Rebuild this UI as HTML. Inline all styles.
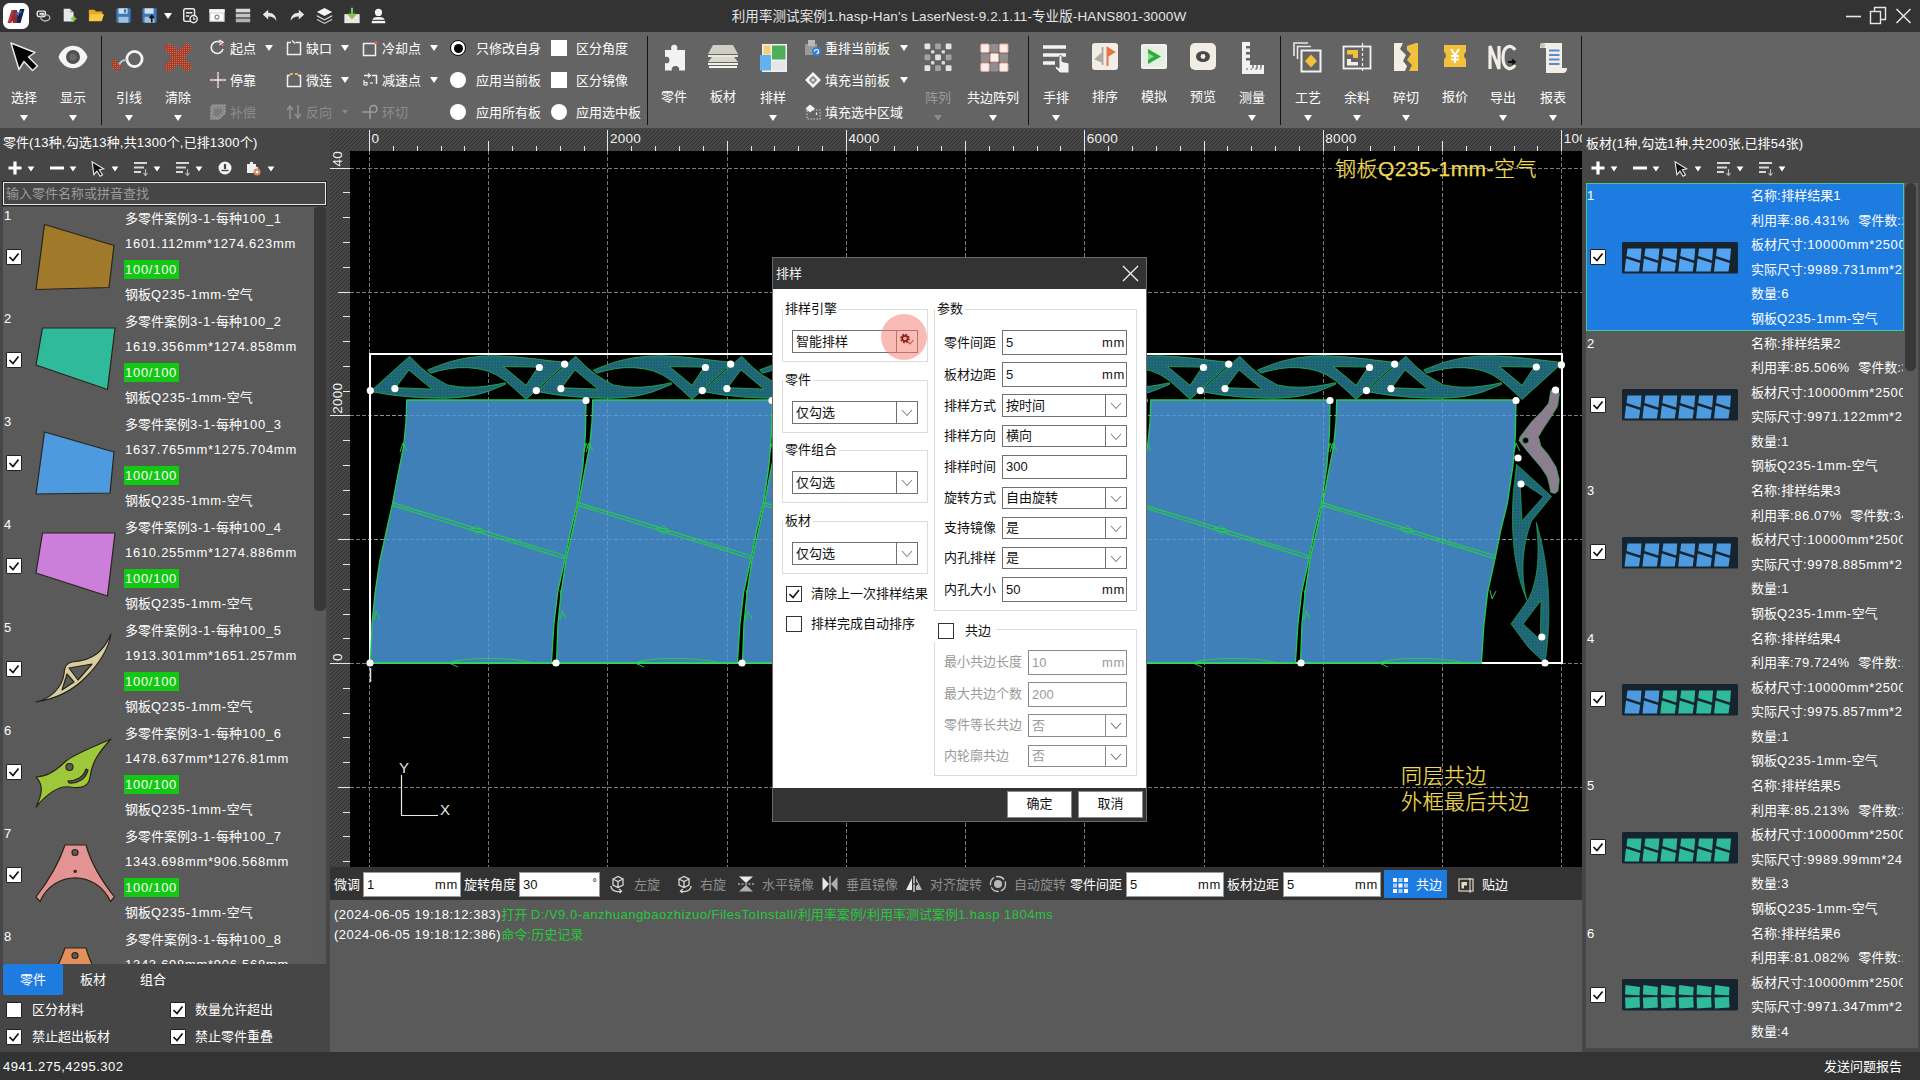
<!DOCTYPE html>
<html lang="zh-CN">
<head>
<meta charset="utf-8">
<title>Han's LaserNest</title>
<style>
html,body{margin:0;padding:0;}
body{width:1920px;height:1080px;overflow:hidden;background:#464646;position:relative;
 font-family:"Liberation Sans","Noto Sans CJK SC",sans-serif;font-size:13px;color:#fff;line-height:1;}
.a{position:absolute;}
.t{position:absolute;white-space:nowrap;line-height:16px;height:16px;}
svg{position:absolute;overflow:visible;}
#titlebar{left:0;top:0;width:1920px;height:32px;background:#333;}
#ribbon{left:0;top:32px;width:1920px;height:96px;background:#646464;}
#status{left:0;top:1052px;width:1920px;height:28px;background:#333;}
.cb{position:absolute;width:16px;height:16px;border-radius:1px;background:#fff;border:1px solid #222;box-sizing:border-box;}
.cb svg{left:0;top:0;}
.rb{position:absolute;width:16px;height:16px;border-radius:50%;background:#fff;box-sizing:border-box;}
.tri{position:absolute;width:0;height:0;border-left:4px solid transparent;border-right:4px solid transparent;border-top:6px solid #fff;}
#qa svg{transform:scale(.9);transform-origin:50% 50%;}
.dis{color:#8a8a8a;}
.l{letter-spacing:.72px;}
</style>
</head>
<body>
<div id="titlebar" class="a">
 <!-- logo -->
 <svg style="left:3px;top:3px" width="26" height="26" viewBox="0 0 26 26"><rect x="0" y="0" width="26" height="26" rx="6.500" fill="#fff"/><path d="M4.500 20 L8.500 7 L12.500 7 L8.500 20 Z" fill="#b8382e"/><path d="M8.500 16 L11 7 L14 7 L15.500 14 L13 20 L10 20 Z" fill="#8c2c34"/><path d="M13 20 L17 6 L21.500 6 L17.500 20 Z" fill="#13244e"/><path d="M12 11 L19 7.500 L18.500 9.500 L12.500 12.500 Z" fill="#2f6fd0"/></svg>
 <!-- quick access icons --><div class="a" id="qa" style="left:0;top:0">
 <svg style="left:35px;top:8px" width="18" height="16" viewBox="0 0 18 16"><rect x="1.5" y="2.5" width="9" height="6" rx="1.5" fill="none" stroke="#eee" stroke-width="1.5"/><ellipse cx="10.5" cy="10" rx="5" ry="3.5" fill="none" stroke="#bbb" stroke-width="1.5"/><rect x="4" y="4.5" width="5" height="2" fill="#eee"/></svg>
 <svg style="left:61px;top:7px" width="18" height="18" viewBox="0 0 18 18"><path d="M2 1 H9 L13 5 V15 H2 Z" fill="#e8e8e8"/><path d="M9 1 L13 5 H9 Z" fill="#aaa"/><path d="M10 12 H16 M13 9 V15" stroke="#8cc04a" stroke-width="2.2"/></svg>
 <svg style="left:87px;top:7px" width="19" height="17" viewBox="0 0 19 17"><path d="M1 2 H7 L9 4 H16 V14 H1 Z" fill="#e9a820"/><path d="M3 7 H18 L15 15 H1 Z" fill="#f7c948"/></svg>
 <svg style="left:115px;top:7px" width="17" height="17" viewBox="0 0 17 17"><rect x="0.5" y="0.5" width="16" height="16" rx="1" fill="#3c78b4"/><rect x="3" y="0.5" width="10" height="6" fill="#cfe0f0"/><rect x="3" y="10" width="11" height="6.5" fill="#9fc0e0"/><rect x="9" y="1.5" width="2.5" height="4" fill="#3c78b4"/></svg>
 <svg style="left:141px;top:7px" width="17" height="17" viewBox="0 0 17 17"><rect x="0.5" y="0.5" width="16" height="16" rx="1" fill="#3c78b4"/><rect x="3" y="0.5" width="10" height="6" fill="#cfe0f0"/><rect x="3" y="10" width="11" height="6.5" fill="#9fc0e0"/><path d="M11 16 V9 M8.5 11.5 L11 8.5 L13.5 11.5" stroke="#111" stroke-width="1.8" fill="none"/></svg>
 <div class="tri" style="left:164px;top:13px"></div>
 <svg style="left:181px;top:6px" width="19" height="19" viewBox="0 0 19 19"><rect x="2" y="2" width="12" height="14" rx="2" fill="none" stroke="#eee" stroke-width="1.6"/><path d="M4.5 6.5 H11.5 M4.5 10 H8" stroke="#eee" stroke-width="1.6"/><circle cx="13" cy="13.5" r="4" fill="#333" stroke="#eee" stroke-width="1.5"/><path d="M13 11.5 V13.5 H15" stroke="#eee" stroke-width="1.2" fill="none"/></svg>
 <svg style="left:208px;top:8px" width="18" height="15" viewBox="0 0 18 15"><rect x="0.5" y="0.5" width="17" height="14" fill="#ddd"/><rect x="0.5" y="0.5" width="17" height="3.5" fill="#f6f6f6"/><rect x="2" y="5.5" width="14" height="7.5" fill="#fff"/><circle cx="9" cy="9.3" r="2.2" fill="none" stroke="#888" stroke-width="1.3"/></svg>
 <svg style="left:234px;top:7px" width="18" height="17" viewBox="0 0 18 17"><rect x="1" y="1" width="16" height="4" fill="#d8d8d8"/><rect x="1" y="6.5" width="16" height="4" fill="#c4c4c4"/><rect x="1" y="12" width="16" height="4" fill="#b0b0b0"/><path d="M1 5.7 H17 M1 11.2 H17" stroke="#777" stroke-width="1"/></svg>
 <svg style="left:261px;top:8px" width="18" height="15" viewBox="0 0 18 15"><path d="M7 1 L1 6.5 L7 12 V8.5 C11 8.5 14 9.5 16 13.5 C16 8 12.5 4.5 7 4.5 Z" fill="#e6e6e6"/></svg>
 <svg style="left:288px;top:8px" width="18" height="15" viewBox="0 0 18 15"><path d="M11 1 L17 6.5 L11 12 V8.5 C7 8.5 4 9.5 2 13.5 C2 8 5.5 4.5 11 4.5 Z" fill="#e6e6e6"/></svg>
 <svg style="left:315px;top:6px" width="19" height="20" viewBox="0 0 19 20"><path d="M9.5 1 L18 5.5 L9.5 10 L1 5.5 Z" fill="#f4f4f4"/><path d="M1 9 L9.5 13.5 L18 9 L18 10.5 L9.5 15 L1 10.5Z" fill="#ddd"/><path d="M1 13 L9.5 17.5 L18 13 L18 14.5 L9.5 19 L1 14.5Z" fill="#ccc"/></svg>
 <svg style="left:343px;top:6px" width="18" height="19" viewBox="0 0 18 19"><rect x="0.5" y="8" width="17" height="10" fill="#e8e8e8"/><path d="M9 1 V11 M5 7.5 L9 12 L13 7.5" stroke="#86c052" stroke-width="2.400" fill="none"/></svg>
 <svg style="left:370px;top:7px" width="17" height="18" viewBox="0 0 17 18"><circle cx="8.5" cy="5" r="4" fill="#f2f2f2"/><path d="M1 17 C1 11 4 10 8.5 10 C13 10 16 11 16 17 Z" fill="#f2f2f2"/><rect x="1" y="13.2" width="15" height="1.2" fill="#333"/></svg>
</div>
 <div class="t" id="ttl" style="left:731px;top:9px;letter-spacing:.12px;width:456px;text-align:center;font-size:13.5px;color:#e4e4e4;">利用率测试案例1.hasp-Han's LaserNest-9.2.1.11-专业版-HANS801-3000W</div>
 <!-- window controls -->
 <svg style="left:1840px;top:0" width="80" height="32" viewBox="0 0 80 32"><path d="M6 16.5 H21" stroke="#e8e8e8" stroke-width="1.6"/><rect x="30.5" y="11.5" width="10" height="12" fill="none" stroke="#e8e8e8" stroke-width="1.4"/><path d="M34.5 11 V7.5 H45.5 V19.5 H41" fill="none" stroke="#e8e8e8" stroke-width="1.4"/><path d="M56.5 9 L70.5 23 M70.5 9 L56.5 23" stroke="#e8e8e8" stroke-width="1.5"/></svg>
</div>
<div id="ribbon" class="a"></div>
<div class="a" style="left:101px;top:36px;width:1px;height:89px;background:#141414"></div>
<div class="a" style="left:647px;top:36px;width:1px;height:89px;background:#141414"></div>
<div class="a" style="left:1028px;top:36px;width:1px;height:89px;background:#141414"></div>
<div class="a" style="left:1280px;top:36px;width:1px;height:89px;background:#141414"></div>
<div class="a" style="left:1581px;top:36px;width:1px;height:89px;background:#141414"></div>
<div class="a" style="left:-6px;top:38px;width:60px;height:40px"><svg width="60" height="40" viewBox="0 0 60 40"><path d="M17 5 L41 14.500 L34.500 19 L43.500 28 L38.500 32.500 L30 23.500 L25 31.500 Z" fill="#000" stroke="#e8e8e8" stroke-width="1.500" stroke-linejoin="round"/></svg></div><div class="t" style="left:-16px;top:90px;width:80px;text-align:center;color:#fff">选择</div><div class="tri" style="left:20px;top:115px;border-top-color:#fff"></div>
<div class="a" style="left:43px;top:38px;width:60px;height:40px"><svg width="60" height="40" viewBox="0 0 60 40"><path d="M15.500 19 C21 4 39 4 44.500 19 C39 34 21 34 15.500 19 Z" fill="#f4f4f4"/><circle cx="30" cy="19" r="5.300" fill="#6a6a6a" stroke="#505050" stroke-width="3.400"/></svg></div><div class="t" style="left:33px;top:90px;width:80px;text-align:center;color:#fff">显示</div><div class="tri" style="left:69px;top:115px;border-top-color:#fff"></div>
<div class="a" style="left:99px;top:38px;width:60px;height:40px"><svg width="60" height="40" viewBox="0 0 60 40"><circle cx="35.500" cy="21" r="7.600" fill="none" stroke="#f6f6f6" stroke-width="2.800"/><path d="M28 22 C24 21.500 21 24 19.500 28" fill="none" stroke="#c4c4c4" stroke-width="2"/><path d="M14 21 C11.500 24 12 30 16 32 C19 33 22.500 32 23 29 L20 26 L17 28 L17.500 22 Z" fill="url(#xp)"/></svg></div><div class="t" style="left:89px;top:90px;width:80px;text-align:center;color:#fff">引线</div><div class="tri" style="left:125px;top:115px;border-top-color:#fff"></div>
<div class="a" style="left:148px;top:38px;width:60px;height:40px"><svg width="60" height="40" viewBox="0 0 60 40"><defs><pattern id="xp" width="2" height="2" patternUnits="userSpaceOnUse"><rect width="2" height="2" fill="#a83a2c"/><rect width="1" height="1" fill="#c87848"/></pattern></defs><path d="M21 10 L39 29 M39 10 L21 29" stroke="url(#xp)" stroke-width="8.500" stroke-linecap="round"/></svg></div><div class="t" style="left:138px;top:90px;width:80px;text-align:center;color:#fff">清除</div><div class="tri" style="left:174px;top:115px;border-top-color:#fff"></div>
<div class="a" style="left:644px;top:38px;width:60px;height:40px"><svg width="60" height="40" viewBox="0 0 60 40"><path d="M21 12 H27.500 C25 5 35.500 5 33 12 H41 V32.500 H35 C37 26.500 26 26.500 28 32.500 H21 V25 C27 27.500 27 16.500 21 19 Z" fill="#f2f2f2"/></svg></div><div class="t" style="left:634px;top:89px;width:80px;text-align:center;color:#fff">零件</div>
<div class="a" style="left:693px;top:38px;width:60px;height:40px"><svg width="60" height="40" viewBox="0 0 60 40"><path d="M20 7 H40 L45 16 H15 Z" fill="#cfcfc4"/><path d="M15 17 H45 V19 H15Z" fill="#e8e8dc"/><path d="M19 19 H41 L45 24 H15 Z" fill="#d8d8cc"/><path d="M15 25 H45 V27 H15Z" fill="#f0f0e6"/><path d="M16 28 H44 V30 H16Z" fill="#f4f4ec"/></svg></div><div class="t" style="left:683px;top:89px;width:80px;text-align:center;color:#fff">板材</div>
<div class="a" style="left:743px;top:38px;width:60px;height:40px"><svg width="60" height="40" viewBox="0 0 60 40"><rect x="19" y="6" width="25" height="28" fill="#f0f0f0"/><rect x="20.500" y="7.500" width="7" height="9" fill="#f2d07a"/><rect x="29" y="7.500" width="13.500" height="14" fill="#4fae5a"/><rect x="17" y="17" width="11" height="15.500" fill="#62b2f0"/><rect x="29" y="23" width="13.500" height="9.500" fill="#e4e6e8"/></svg></div><div class="t" style="left:733px;top:90px;width:80px;text-align:center;color:#fff">排样</div><div class="tri" style="left:769px;top:115px;border-top-color:#fff"></div>
<div class="a" style="left:908px;top:38px;width:60px;height:40px"><svg width="60" height="40" viewBox="0 0 60 40"><rect x="16.5" y="5.5" width="5.800" height="5.800" rx="1.200" fill="#e4e4e4"/><rect x="27.1" y="5.5" width="5.800" height="5.800" rx="1.200" fill="#a2a2a2"/><rect x="37.7" y="5.5" width="5.800" height="5.800" rx="1.200" fill="#e4e4e4"/><rect x="16.5" y="16.4" width="5.800" height="5.800" rx="1.200" fill="#a2a2a2"/><rect x="27.1" y="16.4" width="5.800" height="5.800" rx="1.200" fill="#e4e4e4"/><rect x="37.7" y="16.4" width="5.800" height="5.800" rx="1.200" fill="#a2a2a2"/><rect x="16.5" y="27.3" width="5.800" height="5.800" rx="1.200" fill="#e4e4e4"/><rect x="27.1" y="27.3" width="5.800" height="5.800" rx="1.200" fill="#a2a2a2"/><rect x="37.7" y="27.3" width="5.800" height="5.800" rx="1.200" fill="#e4e4e4"/><rect x="23.0" y="12.2" width="3.400" height="3.400" rx="1" fill="#dcdcdc"/><rect x="33.6" y="12.2" width="3.400" height="3.400" rx="1" fill="#dcdcdc"/><rect x="23.0" y="23.1" width="3.400" height="3.400" rx="1" fill="#dcdcdc"/><rect x="33.6" y="23.1" width="3.400" height="3.400" rx="1" fill="#dcdcdc"/></svg></div><div class="t" style="left:898px;top:90px;width:80px;text-align:center;color:#9a9a9a">阵列</div><div class="tri" style="left:934px;top:115px;border-top-color:#8a8a8a"></div>
<div class="a" style="left:963px;top:38px;width:60px;height:40px"><svg width="60" height="40" viewBox="0 0 60 40"><rect x="17.8" y="6.0" width="8.400" height="8.400" rx="1" fill="#fbefec" stroke="#e8a496" stroke-width="1"/><rect x="27.2" y="6.0" width="8.400" height="8.400" rx="1" fill="#8e8e8e"/><rect x="36.6" y="6.0" width="8.400" height="8.400" rx="1" fill="#fbefec" stroke="#e8a496" stroke-width="1"/><rect x="17.8" y="15.5" width="8.400" height="8.400" rx="1" fill="#8e8e8e"/><rect x="27.2" y="15.5" width="8.400" height="8.400" rx="1" fill="#fbefec" stroke="#e8a496" stroke-width="1"/><rect x="36.6" y="15.5" width="8.400" height="8.400" rx="1" fill="#8e8e8e"/><rect x="17.8" y="25.0" width="8.400" height="8.400" rx="1" fill="#fbefec" stroke="#e8a496" stroke-width="1"/><rect x="27.2" y="25.0" width="8.400" height="8.400" rx="1" fill="#8e8e8e"/><rect x="36.6" y="25.0" width="8.400" height="8.400" rx="1" fill="#fbefec" stroke="#e8a496" stroke-width="1"/></svg></div><div class="t" style="left:953px;top:90px;width:80px;text-align:center;color:#fff">共边阵列</div><div class="tri" style="left:989px;top:115px;border-top-color:#fff"></div>
<div class="a" style="left:1026px;top:38px;width:60px;height:40px"><svg width="60" height="40" viewBox="0 0 60 40"><path d="M17 9 H40 M17 17 H40 M17 25 H29" stroke="#f2f2f2" stroke-width="3.4"/><path d="M33 19 V30 L30 28 L29 30 L34 35 H43 V25 L36 23.5 V19 C36 17 33 17 33 19 Z" fill="#f2f2f2" stroke="#646464" stroke-width="1"/></svg></div><div class="t" style="left:1016px;top:90px;width:80px;text-align:center;color:#fff">手排</div><div class="tri" style="left:1052px;top:115px;border-top-color:#fff"></div>
<div class="a" style="left:1075px;top:38px;width:60px;height:40px"><svg width="60" height="40" viewBox="0 0 60 40"><rect x="17" y="5" width="26" height="27" rx="3" fill="#f2eee6"/><path d="M27.500 9 V27 M27.500 15 L21 21 L27.500 24 Z" stroke="#b0aaa4" stroke-width="2" fill="#b0aaa4"/><path d="M32.500 9 V28 M32.500 10 L39 14 L32.500 18 Z" stroke="#e07848" stroke-width="2" fill="#e07848"/></svg></div><div class="t" style="left:1065px;top:89px;width:80px;text-align:center;color:#fff">排序</div>
<div class="a" style="left:1124px;top:38px;width:60px;height:40px"><svg width="60" height="40" viewBox="0 0 60 40"><rect x="17" y="6" width="26" height="25" rx="2" fill="#f2f2f2"/><rect x="19" y="8" width="22" height="21" fill="#e4f0e0"/><path d="M24 11 L37 18.500 L24 26 Z" fill="#2faa3c"/><path d="M24 15 L30 18.500 L24 22Z" fill="#8fd890"/></svg></div><div class="t" style="left:1114px;top:89px;width:80px;text-align:center;color:#fff">模拟</div>
<div class="a" style="left:1173px;top:38px;width:60px;height:40px"><svg width="60" height="40" viewBox="0 0 60 40"><rect x="17" y="5" width="26" height="27" rx="5" fill="#f2eee6"/><ellipse cx="30" cy="18.500" rx="7" ry="5.500" fill="#4a4a4a"/><circle cx="30" cy="18.500" r="2.400" fill="#f2eee6"/></svg></div><div class="t" style="left:1163px;top:89px;width:80px;text-align:center;color:#fff">预览</div>
<div class="a" style="left:1222px;top:38px;width:60px;height:40px"><svg width="60" height="40" viewBox="0 0 60 40"><path d="M20 4 H28 V8 H24 V10.500 H28 V14 H24 V16.500 H28 V20 H24 V22.500 H28 V27 H42 V36 H20 Z" fill="#f2f2f2"/><path d="M24 31 H40" stroke="#646464" stroke-width="1" stroke-dasharray="2 2.500"/><path d="M31 27 V30 M35 27 V31 M39 27 V30" stroke="#646464" stroke-width="1.300"/></svg></div><div class="t" style="left:1212px;top:90px;width:80px;text-align:center;color:#fff">测量</div><div class="tri" style="left:1248px;top:115px;border-top-color:#fff"></div>
<div class="a" style="left:1278px;top:38px;width:60px;height:40px"><svg width="60" height="40" viewBox="0 0 60 40"><path d="M16 18 V5 H30" fill="none" stroke="#e8e8e8" stroke-width="1.600"/><path d="M19.500 21 V8.500 H33" fill="none" stroke="#e8e8e8" stroke-width="1.600"/><rect x="23.500" y="12.500" width="19" height="21" fill="none" stroke="#f2f2f2" stroke-width="2"/><path d="M33 16.500 L39 23 L33 29.500 L27 23 Z" fill="#f2c03a"/></svg></div><div class="t" style="left:1268px;top:90px;width:80px;text-align:center;color:#fff">工艺</div><div class="tri" style="left:1304px;top:115px;border-top-color:#fff"></div>
<div class="a" style="left:1327px;top:38px;width:60px;height:40px"><svg width="60" height="40" viewBox="0 0 60 40"><rect x="16.500" y="8.500" width="27" height="22" fill="none" stroke="#f2f2f2" stroke-width="1.800"/><path d="M35.500 5 V34" stroke="#f2f2f2" stroke-width="1.200" stroke-dasharray="3 2"/><path d="M20 12 H31 V20 H26 V16.500 H20 Z" fill="#f2c03a"/><path d="M20 21 H24 V24 H31 V27.500 H20 Z" fill="#f2eee6"/></svg></div><div class="t" style="left:1317px;top:90px;width:80px;text-align:center;color:#fff">余料</div><div class="tri" style="left:1353px;top:115px;border-top-color:#fff"></div>
<div class="a" style="left:1376px;top:38px;width:60px;height:40px"><svg width="60" height="40" viewBox="0 0 60 40"><path d="M18 5 H27 L24 11 L30 17 L27 23 L31 28 L29 33 H18 Z" fill="#f2eee6"/><path d="M31 8 L40 5 H42 V33 H33 L36 27 L31 22 L35 16 L31 12 Z" fill="#f2c03a"/></svg></div><div class="t" style="left:1366px;top:90px;width:80px;text-align:center;color:#fff">碎切</div><div class="tri" style="left:1402px;top:115px;border-top-color:#fff"></div>
<div class="a" style="left:1425px;top:38px;width:60px;height:40px"><svg width="60" height="40" viewBox="0 0 60 40"><path d="M19 7 H41 V14 C38.500 15 38.500 20 41 21 V29 H19 V21 C21.500 20 21.500 15 19 14 Z" fill="#f2c03a"/><path d="M26 11 L30 17 L34 11 M30 17 V25 M26 18 H34 M26 21.500 H34" fill="none" stroke="#fff" stroke-width="2"/></svg></div><div class="t" style="left:1415px;top:89px;width:80px;text-align:center;color:#fff">报价</div>
<div class="a" style="left:1473px;top:38px;width:60px;height:40px"><svg width="60" height="40" viewBox="0 0 60 40"><path d="M17 31 V8 L26 31 V8" fill="none" stroke="#f2eee6" stroke-width="3.200" stroke-linejoin="miter"/><path d="M42 12 C39 6 30 7 30 19.500 C30 32 39 33 42 27" fill="none" stroke="#f2eee6" stroke-width="3.200"/><path d="M35 24 H41 M39 21.500 L42 24 L39 26.500" stroke="#111" stroke-width="1.800" fill="none"/></svg></div><div class="t" style="left:1463px;top:90px;width:80px;text-align:center;color:#fff">导出</div><div class="tri" style="left:1499px;top:115px;border-top-color:#fff"></div>
<div class="a" style="left:1523px;top:38px;width:60px;height:40px"><svg width="60" height="40" viewBox="0 0 60 40"><path d="M19 5 H39 V30 H44 C44 34 42 35 40 35 H23 V10 H17 C17 6 18 5 19 5 Z" fill="#f2eee6"/><circle cx="19.500" cy="7.500" r="2.500" fill="#c8c4bc"/><path d="M26 12.500 H36.500 M26 17 H36.500 M26 21.500 H36.500 M26 26 H36.500" stroke="#5a8ac8" stroke-width="2"/></svg></div><div class="t" style="left:1513px;top:90px;width:80px;text-align:center;color:#fff">报表</div><div class="tri" style="left:1549px;top:115px;border-top-color:#fff"></div>
<div class="a" style="left:209px;top:39px;width:18px;height:18px"><svg width="18" height="18" viewBox="0 0 18 18"><path d="M11.500 3.500 A6 6 0 1 0 14 10" fill="none" stroke="#f0f0f0" stroke-width="1.600"/><path d="M10 1 L14 3.200 L10.500 6" fill="none" stroke="#f0f0f0" stroke-width="1.400"/><circle cx="14" cy="6" r="1.300" fill="#d06050"/></svg></div><div class="t" style="left:230px;top:41px;color:#fff">起点</div><div class="tri" style="left:265px;top:45px;border-top-color:#fff;"></div>
<div class="a" style="left:209px;top:71px;width:18px;height:18px"><svg width="18" height="18" viewBox="0 0 18 18"><path d="M9 1 V17 M1 9 H17" stroke="#f0f0f0" stroke-width="1.300"/><path d="M9 5 L7 3 H11 Z M9 13 L7 15 H11Z M5 9 L3 7 V11 Z M13 9 L15 7 V11Z" fill="#d89080"/></svg></div><div class="t" style="left:230px;top:73px;color:#fff">停靠</div>
<div class="a" style="left:209px;top:103px;width:18px;height:18px"><svg width="18" height="18" viewBox="0 0 18 18"><path d="M2 5 C2 3 3 2 5 2 H16 V10 L10 16 H2 Z" fill="#8a8a8a" stroke="#9c9c9c" stroke-width="1.500" stroke-dasharray="2 1"/><path d="M5 6 H13 V9 L9 13 H5Z" fill="#7a7a7a"/></svg></div><div class="t" style="left:230px;top:105px;color:#8c8c8c">补偿</div>
<div class="a" style="left:285px;top:39px;width:18px;height:18px"><svg width="18" height="18" viewBox="0 0 18 18"><path d="M6 3.500 H2.500 V15.500 H15.500 V3.500 H10.500" fill="none" stroke="#f0f0f0" stroke-width="1.500"/><path d="M7 1.500 L10 4.500" stroke="#f0f0f0" stroke-width="1.300"/></svg></div><div class="t" style="left:306px;top:41px;color:#fff">缺口</div><div class="tri" style="left:341px;top:45px;border-top-color:#fff;"></div>
<div class="a" style="left:285px;top:71px;width:18px;height:18px"><svg width="18" height="18" viewBox="0 0 18 18"><path d="M5 4.500 H2.500 V15.500 H15.500 V4.500 H13" fill="none" stroke="#f0f0f0" stroke-width="1.500"/><path d="M5 3 H8 M10 3 H13" stroke="#e8b060" stroke-width="2.200"/></svg></div><div class="t" style="left:306px;top:73px;color:#fff">微连</div><div class="tri" style="left:341px;top:77px;border-top-color:#fff;"></div>
<div class="a" style="left:285px;top:103px;width:18px;height:18px"><svg width="18" height="18" viewBox="0 0 18 18"><path d="M5 16 V4 M2 7 L5 3 L8 7" fill="none" stroke="#909090" stroke-width="1.600"/><path d="M13 2 V14 M10 11 L13 15 L16 11" fill="none" stroke="#909090" stroke-width="1.600"/></svg></div><div class="t" style="left:306px;top:105px;color:#8c8c8c">反向</div><div class="tri" style="left:341px;top:109px;border-top-color:#8c8c8c;transform:scale(.7)"></div>
<div class="a" style="left:361px;top:39px;width:18px;height:18px"><svg width="18" height="18" viewBox="0 0 18 18"><rect x="2.500" y="4.500" width="12" height="12" fill="none" stroke="#f0f0f0" stroke-width="1.500"/><circle cx="15" cy="3.500" r="1.800" fill="#d06050"/></svg></div><div class="t" style="left:382px;top:41px;color:#fff">冷却点</div><div class="tri" style="left:430px;top:45px;border-top-color:#fff;"></div>
<div class="a" style="left:361px;top:71px;width:18px;height:18px"><svg width="18" height="18" viewBox="0 0 18 18"><path d="M3 4.500 H8 M11 4.500 H15.500 V13" fill="none" stroke="#f0f0f0" stroke-width="1.500"/><path d="M7 2.500 L9.500 4.500 L7 6.500" fill="none" stroke="#f0f0f0" stroke-width="1.200"/><path d="M3 9 V14 H6 V11.500 H3" fill="none" stroke="#f0f0f0" stroke-width="1.200"/><path d="M9 12 H12" stroke="#f0f0f0" stroke-width="1.200"/></svg></div><div class="t" style="left:382px;top:73px;color:#fff">减速点</div><div class="tri" style="left:430px;top:77px;border-top-color:#fff;"></div>
<div class="a" style="left:361px;top:103px;width:18px;height:18px"><svg width="18" height="18" viewBox="0 0 18 18"><path d="M1 9 H12" stroke="#a0a0a0" stroke-width="1.400"/><path d="M9 16 V6 A3.500 3.500 0 1 1 12.500 9.500" fill="none" stroke="#a0a0a0" stroke-width="1.500"/></svg></div><div class="t" style="left:382px;top:105px;color:#8c8c8c">环切</div>
<div class="a" style="left:804px;top:39px;width:18px;height:18px"><svg width="18" height="18" viewBox="0 0 18 18"><rect x="1" y="5" width="12" height="11" fill="#9a9a9a"/><rect x="4" y="1" width="7" height="6" fill="#b8b8b8"/><circle cx="12.500" cy="12.500" r="4.500" fill="#2f7fe0"/><path d="M10.500 12.500 A2 2 0 1 1 12.500 14.500" fill="none" stroke="#fff" stroke-width="1.200"/></svg></div><div class="t" style="left:825px;top:41px;color:#fff">重排当前板</div><div class="tri" style="left:900px;top:45px;border-top-color:#fff;"></div>
<div class="a" style="left:804px;top:71px;width:18px;height:18px"><svg width="18" height="18" viewBox="0 0 18 18"><path d="M9 1 L17 9 L9 17 L1 9 Z" fill="#f6f6f6"/><path d="M9 4.800 L13.200 9 L9 13.200 L4.800 9 Z" fill="#868686"/><circle cx="9" cy="9" r="1.600" fill="#e0e0e0"/></svg></div><div class="t" style="left:825px;top:73px;color:#fff">填充当前板</div><div class="tri" style="left:900px;top:77px;border-top-color:#fff;"></div>
<div class="a" style="left:804px;top:103px;width:18px;height:18px"><svg width="18" height="18" viewBox="0 0 18 18"><rect x="3" y="7" width="13" height="9" fill="none" stroke="#d0d0d0" stroke-width="1.100" stroke-dasharray="1.500 1.500"/><path d="M6 1.500 L11 5.500 L6 9.500 L1.500 5.500 Z" fill="#f4f4f4"/><path d="M12.500 9 C13.500 10.500 13.500 12 12.500 12 C11.500 12 11.500 10.500 12.500 9Z" fill="#f4f4f4"/></svg></div><div class="t" style="left:825px;top:105px;color:#fff">填充选中区域</div>
<div class="rb" style="left:450px;top:40px;border:1px solid #000;"><div class="a" style="left:2.500px;top:2.500px;width:9px;height:9px;border-radius:50%;background:#000"></div></div><div class="t" style="left:476px;top:41px">只修改自身</div>
<div class="rb" style="left:450px;top:72px;"></div><div class="t" style="left:476px;top:73px">应用当前板</div>
<div class="rb" style="left:450px;top:104px;"></div><div class="t" style="left:476px;top:105px">应用所有板</div>
<div class="a" style="left:551px;top:40px;width:16px;height:16px;background:#fff"></div><div class="t" style="left:576px;top:41px">区分角度</div>
<div class="a" style="left:551px;top:72px;width:16px;height:16px;background:#fff"></div><div class="t" style="left:576px;top:73px">区分镜像</div>
<div class="rb" style="left:551px;top:104px;"></div><div class="t" style="left:576px;top:105px">应用选中板</div>
<div class="t" style="left:3px;top:135px;" id="lh">零件<span style="letter-spacing:0.3px">(13</span>种<span style="letter-spacing:0.3px">,</span>勾选<span style="letter-spacing:0.3px">13</span>种<span style="letter-spacing:0.3px">,</span>共<span style="letter-spacing:0.3px">1300</span>个<span style="letter-spacing:0.3px">,</span>已排<span style="letter-spacing:0.3px">1300</span>个<span style="letter-spacing:0.3px">)</span></div>
<svg style="left:0;top:158px" width="330" height="22" viewBox="0 0 330 22"><path d="M15 3.500 V16.500 M8.500 10 H21.500" stroke="#fff" stroke-width="3.200"/><path d="M50 10 H64" stroke="#fff" stroke-width="3"/><path d="M93 3 L93 16 L96.500 13 L99 18.500 L101.500 17.300 L99 12 L103.500 11.500 Z" fill="#111" stroke="#eee" stroke-width="1.100" transform="rotate(-8 98 10)"/><path d="M134 5 H147 M134 9.500 H144 M134 14 H141" stroke="#d8d8d8" stroke-width="1.800"/><path d="M145.500 11 V17 M143.500 15 L145.500 17.500 L147.500 15" stroke="#bbb" stroke-width="1.100" fill="none"/><path d="M176 5 H189 M176 9.500 H186 M176 14 H183" stroke="#d8d8d8" stroke-width="1.800"/><path d="M187.500 11 V17 M185.500 15 L187.500 17.500 L189.500 15" stroke="#bbb" stroke-width="1.100" fill="none"/><circle cx="225" cy="10" r="6.500" fill="#f4f4f4"/><path d="M225 6 V11" stroke="#444" stroke-width="2.200"/><path d="M221.500 12.500 H228.500" stroke="#444" stroke-width="1.400"/><path d="M247 6 H250 C249 3 254 3 253 6 H256 V9 C259 8 259 13 256 12 V15 H247 Z" fill="#f0f0f0"/><circle cx="257" cy="14" r="3.500" fill="#e08868"/><circle cx="257" cy="14" r="1.300" fill="#fff"/></svg><div class="tri" style="left:27px;top:166px;transform:scale(.85)"></div><div class="tri" style="left:69px;top:166px;transform:scale(.85)"></div><div class="tri" style="left:111px;top:166px;transform:scale(.85)"></div><div class="tri" style="left:153px;top:166px;transform:scale(.85)"></div><div class="tri" style="left:195px;top:166px;transform:scale(.85)"></div><div class="tri" style="left:267px;top:166px;transform:scale(.85)"></div>
<div class="a" style="left:3px;top:182px;width:323px;height:23px;box-sizing:border-box;border:1px solid #e8e8e8;box-shadow:0 0 0 1px #222"></div><div class="t" style="left:6px;top:186px;color:#9c9c9c">输入零件名称或拼音查找</div>
<div class="a" style="left:3px;top:207px;width:323px;height:757px;background:#5a5a5a;overflow:hidden">
<div class="a" style="left:311px;top:0;width:12px;height:757px;background:#595959"></div><div class="a" style="left:311px;top:0;width:12px;height:404px;background:#383838;border-radius:3px 3px 5px 5px"></div>
<div class="t" style="left:1px;top:1px">1</div><div class="cb" style="left:3px;top:42px"><svg width="14" height="14" viewBox="0 0 14 14"><path d="M2.500 7 L6 10.500 L11.500 3.500" fill="none" stroke="#111" stroke-width="1.700"/></svg></div><svg style="left:-3px;top:-207px" width="330" height="300" viewBox="0 0 330 300" fill="#a07a2a" stroke="#2a2418" stroke-width="1.200" stroke-linejoin="round"><path d="M44.500 224.500 L114 245.500 L109 287.500 L36 289.500 Z" /></svg><div class="t" style="left:122px;top:4px">多零件案例<span class="l">3-1-</span>每种<span class="l">100_1</span></div><div class="t" style="left:122px;top:29px"><span class="l">1601.112mm*1274.623mm</span></div><div class="a" style="left:121px;top:53px;width:55px;height:19px;background:#12c812"></div><div class="t" style="left:122px;top:55px"><span class="l">100/100</span></div><div class="t" style="left:122px;top:80px">钢板<span class="l">Q235-1mm-</span>空气</div>
<div class="t" style="left:1px;top:104px">2</div><div class="cb" style="left:3px;top:145px"><svg width="14" height="14" viewBox="0 0 14 14"><path d="M2.500 7 L6 10.500 L11.500 3.500" fill="none" stroke="#111" stroke-width="1.700"/></svg></div><svg style="left:-3px;top:-104px" width="330" height="300" viewBox="0 0 330 300" fill="#2fba9c" stroke="#2a2418" stroke-width="1.200" stroke-linejoin="round"><path d="M42.500 225 L115 225 L107.500 286.500 L36 262 Z" /></svg><div class="t" style="left:122px;top:107px">多零件案例<span class="l">3-1-</span>每种<span class="l">100_2</span></div><div class="t" style="left:122px;top:132px"><span class="l">1619.356mm*1274.858mm</span></div><div class="a" style="left:121px;top:156px;width:55px;height:19px;background:#12c812"></div><div class="t" style="left:122px;top:158px"><span class="l">100/100</span></div><div class="t" style="left:122px;top:183px">钢板<span class="l">Q235-1mm-</span>空气</div>
<div class="t" style="left:1px;top:207px">3</div><div class="cb" style="left:3px;top:248px"><svg width="14" height="14" viewBox="0 0 14 14"><path d="M2.500 7 L6 10.500 L11.500 3.500" fill="none" stroke="#111" stroke-width="1.700"/></svg></div><svg style="left:-3px;top:-1px" width="330" height="300" viewBox="0 0 330 300" fill="#4d9bde" stroke="#2a2418" stroke-width="1.200" stroke-linejoin="round"><path d="M44.500 226 L114 246 L110 287 L36 288 Z" /></svg><div class="t" style="left:122px;top:210px">多零件案例<span class="l">3-1-</span>每种<span class="l">100_3</span></div><div class="t" style="left:122px;top:235px"><span class="l">1637.765mm*1275.704mm</span></div><div class="a" style="left:121px;top:259px;width:55px;height:19px;background:#12c812"></div><div class="t" style="left:122px;top:261px"><span class="l">100/100</span></div><div class="t" style="left:122px;top:286px">钢板<span class="l">Q235-1mm-</span>空气</div>
<div class="t" style="left:1px;top:310px">4</div><div class="cb" style="left:3px;top:351px"><svg width="14" height="14" viewBox="0 0 14 14"><path d="M2.500 7 L6 10.500 L11.500 3.500" fill="none" stroke="#111" stroke-width="1.700"/></svg></div><svg style="left:-3px;top:102px" width="330" height="300" viewBox="0 0 330 300" fill="#cb7fdb" stroke="#2a2418" stroke-width="1.200" stroke-linejoin="round"><path d="M42.500 224 L115 224 L107.500 287 L36 264 Z" /></svg><div class="t" style="left:122px;top:313px">多零件案例<span class="l">3-1-</span>每种<span class="l">100_4</span></div><div class="t" style="left:122px;top:338px"><span class="l">1610.255mm*1274.886mm</span></div><div class="a" style="left:121px;top:362px;width:55px;height:19px;background:#12c812"></div><div class="t" style="left:122px;top:364px"><span class="l">100/100</span></div><div class="t" style="left:122px;top:389px">钢板<span class="l">Q235-1mm-</span>空气</div>
<div class="t" style="left:1px;top:413px">5</div><div class="cb" style="left:3px;top:454px"><svg width="14" height="14" viewBox="0 0 14 14"><path d="M2.500 7 L6 10.500 L11.500 3.500" fill="none" stroke="#111" stroke-width="1.700"/></svg></div><svg style="left:-3px;top:205px" width="330" height="300" viewBox="0 0 330 300" fill="#d6cfa2" stroke="#2a2418" stroke-width="1.200" stroke-linejoin="round"><path d="M36 290 C55 287 72 279 85 266 C97 254 108 240 111 222 C104 238 95 248 72 250 C66 251 64 256 64 262 C62 276 50 287 36 290 Z M69 256 L92 252 L78 268 Z M67 262 L62 278 L74 270 Z" fill-rule="evenodd"/></svg><div class="t" style="left:122px;top:416px">多零件案例<span class="l">3-1-</span>每种<span class="l">100_5</span></div><div class="t" style="left:122px;top:441px"><span class="l">1913.301mm*1651.257mm</span></div><div class="a" style="left:121px;top:465px;width:55px;height:19px;background:#12c812"></div><div class="t" style="left:122px;top:467px"><span class="l">100/100</span></div><div class="t" style="left:122px;top:492px">钢板<span class="l">Q235-1mm-</span>空气</div>
<div class="t" style="left:1px;top:516px">6</div><div class="cb" style="left:3px;top:557px"><svg width="14" height="14" viewBox="0 0 14 14"><path d="M2.500 7 L6 10.500 L11.500 3.500" fill="none" stroke="#111" stroke-width="1.700"/></svg></div><svg style="left:-3px;top:308px" width="330" height="300" viewBox="0 0 330 300" fill="#9cc83a" stroke="#2a2418" stroke-width="1.200" stroke-linejoin="round"><path d="M36 262 C48 262 58 254 66 246 C78 237 96 231 111 224 C100 236 92 246 90 262 C89 272 80 274 70 272 C58 270 46 280 36 292 C42 280 44 270 36 262 Z M66 252 a3.500 3.500 0 1 0 7 0 a3.500 3.500 0 1 0 -7 0 Z M68 266 C76 266 84 262 86 254 L88 255 C86 264 77 269 69 268 Z" fill-rule="evenodd"/></svg><div class="t" style="left:122px;top:519px">多零件案例<span class="l">3-1-</span>每种<span class="l">100_6</span></div><div class="t" style="left:122px;top:544px"><span class="l">1478.637mm*1276.81mm</span></div><div class="a" style="left:121px;top:568px;width:55px;height:19px;background:#12c812"></div><div class="t" style="left:122px;top:570px"><span class="l">100/100</span></div><div class="t" style="left:122px;top:595px">钢板<span class="l">Q235-1mm-</span>空气</div>
<div class="t" style="left:1px;top:619px">7</div><div class="cb" style="left:3px;top:660px"><svg width="14" height="14" viewBox="0 0 14 14"><path d="M2.500 7 L6 10.500 L11.500 3.500" fill="none" stroke="#111" stroke-width="1.700"/></svg></div><svg style="left:-3px;top:411px" width="330" height="300" viewBox="0 0 330 300" fill="#e39394" stroke="#2a2418" stroke-width="1.200" stroke-linejoin="round"><path d="M65 227 L86 227 C91 245 101 262 114.500 279 L110.500 283.500 C96 252 54 252 40 283.500 L36 279 C49 262 59 245 65 227 Z M72 234.500 a3 3 0 1 0 6 0 a3 3 0 1 0 -6 0 Z M74 253.300 a1.200 1 0 1 0 2.400 0 a1.200 1 0 1 0 -2.400 0Z" fill-rule="evenodd"/></svg><div class="t" style="left:122px;top:622px">多零件案例<span class="l">3-1-</span>每种<span class="l">100_7</span></div><div class="t" style="left:122px;top:647px"><span class="l">1343.698mm*906.568mm</span></div><div class="a" style="left:121px;top:671px;width:55px;height:19px;background:#12c812"></div><div class="t" style="left:122px;top:673px"><span class="l">100/100</span></div><div class="t" style="left:122px;top:698px">钢板<span class="l">Q235-1mm-</span>空气</div>
<div class="t" style="left:1px;top:722px">8</div><div class="cb" style="left:3px;top:763px"><svg width="14" height="14" viewBox="0 0 14 14"><path d="M2.500 7 L6 10.500 L11.500 3.500" fill="none" stroke="#111" stroke-width="1.700"/></svg></div><svg style="left:-3px;top:514px" width="330" height="300" viewBox="0 0 330 300" fill="#e3915c" stroke="#2a2418" stroke-width="1.200" stroke-linejoin="round"><path d="M65 227 L86 227 C91 245 101 262 114.500 279 L110.500 283.500 C96 252 54 252 40 283.500 L36 279 C49 262 59 245 65 227 Z M72 234.500 a3 3 0 1 0 6 0 a3 3 0 1 0 -6 0 Z" fill-rule="evenodd"/></svg><div class="t" style="left:122px;top:725px">多零件案例<span class="l">3-1-</span>每种<span class="l">100_8</span></div><div class="t" style="left:122px;top:750px"><span class="l">1343.698mm*906.568mm</span></div><div class="a" style="left:121px;top:774px;width:55px;height:19px;background:#12c812"></div><div class="t" style="left:122px;top:776px"><span class="l">100/100</span></div><div class="t" style="left:122px;top:801px">钢板<span class="l">Q235-1mm-</span>空气</div>
</div>
<div class="a" style="left:3px;top:964px;width:60px;height:31px;background:#1e7be0;border-radius:2px"></div><div class="t" style="left:13px;top:972px;width:40px;text-align:center">零件</div><div class="t" style="left:73px;top:972px;width:40px;text-align:center">板材</div><div class="t" style="left:133px;top:972px;width:40px;text-align:center">组合</div>
<div class="cb" style="left:6px;top:1002px"></div><div class="t" style="left:32px;top:1002px">区分材料</div><div class="cb" style="left:170px;top:1002px"><svg width="14" height="14" viewBox="0 0 14 14"><path d="M2.500 7 L6 10.500 L11.500 3.500" fill="none" stroke="#111" stroke-width="1.700"/></svg></div><div class="t" style="left:195px;top:1002px">数量允许超出</div><div class="cb" style="left:6px;top:1029px"><svg width="14" height="14" viewBox="0 0 14 14"><path d="M2.500 7 L6 10.500 L11.500 3.500" fill="none" stroke="#111" stroke-width="1.700"/></svg></div><div class="t" style="left:32px;top:1029px">禁止超出板材</div><div class="cb" style="left:170px;top:1029px"><svg width="14" height="14" viewBox="0 0 14 14"><path d="M2.500 7 L6 10.500 L11.500 3.500" fill="none" stroke="#111" stroke-width="1.700"/></svg></div><div class="t" style="left:195px;top:1029px">禁止零件重叠</div>
<div class="a" id="canvas" style="left:330px;top:129px;width:1252px;height:738px;background:#000;overflow:hidden">
<svg style="left:0;top:0" width="1252" height="738" viewBox="330 129 1252 738">
<defs><pattern id="rt" width="4" height="4" patternUnits="userSpaceOnUse"><rect width="4" height="4" fill="#474747"/><rect x="0" y="0" width="1" height="1" fill="#2e2e2e"/><rect x="2" y="2" width="1" height="1" fill="#2e2e2e"/><rect x="1" y="3" width="1" height="1" fill="#333"/><rect x="3" y="1" width="1" height="1" fill="#333"/></pattern><pattern id="tt" width="3" height="3" patternUnits="userSpaceOnUse"><rect width="3" height="3" fill="#1c6674"/><rect x="1" y="1" width="1" height="1" fill="#3a6e8c"/></pattern></defs>
<g stroke="#7a7a7a" stroke-width="1" stroke-dasharray="4 2" opacity="1"><path d="M369.5 151 V867"/><path d="M488.5 151 V867"/><path d="M607.5 151 V867"/><path d="M727.5 151 V867"/><path d="M846.5 151 V867"/><path d="M965.5 151 V867"/><path d="M1084.5 151 V867"/><path d="M1204.5 151 V867"/><path d="M1323.5 151 V867"/><path d="M1442.5 151 V867"/><path d="M1561.5 151 V867"/><path d="M350 787.5 H1582"/><path d="M350 663.5 H1582"/><path d="M350 539.5 H1582"/><path d="M350 415.5 H1582"/><path d="M350 292.5 H1582"/><path d="M350 168.5 H1582"/></g>
<rect x="370" y="354" width="1192" height="309" fill="none" stroke="#fff" stroke-width="2"/>
<path d="M370.500 668 V682" stroke="#ddd" stroke-width="1.500"/>
<path d="M586.0 400.0 L585.4 434.4 L582.9 465.9 L577.3 503.7 L570.3 532.0 L564.7 560.3 L557.7 591.8 L554.0 623.3 L551.4 663.0 L370.5 663.0 L372.0 623.3 L375.2 591.8 L379.9 560.3 L386.2 532.0 L392.5 503.7 L397.2 478.5 L403.5 447.0 L406.0 421.8 L406.7 400.0 Z" fill="#4080b8" stroke="#28c850" stroke-width="1.300" stroke-linejoin="round"/><path d="M392.5 502.6 L566.0 556.0 M392.0 505.4 L565.0 558.8" stroke="#28c850" stroke-width="1.100" fill="none"/><path d="M400.0 507.0 C430.0 512.0 520.0 542.0 555.0 556.0" stroke="#28c850" stroke-width=".8" fill="none" opacity=".8"/><path d="M470.0 528.0 l12 1 m-12 -1 l9 7 M484.0 532.0 l-11 -1 m11 1 l-8 -7 M400.0 452.0 l3 -9 l4 8 M560.0 590.0 l2 9 l4 -8 M584.0 452.0 l2 -9 l4 8 M374.0 620.0 l2 -9 l4 8 M459.0 660.0 l-10 3 l9 4" stroke="#28c850" stroke-width="1" fill="none"/><path d="M450.0 663.0 C465.0 657.0 505.0 657.0 530.0 662.0" stroke="#28c850" stroke-width="1" fill="none"/>
<path d="M772.0 400.0 L771.4 434.4 L768.9 465.9 L763.3 503.7 L756.3 532.0 L750.7 560.3 L743.7 591.8 L740.0 623.3 L737.4 663.0 L556.5 663.0 L558.0 623.3 L561.2 591.8 L565.9 560.3 L572.2 532.0 L578.5 503.7 L583.2 478.5 L589.5 447.0 L592.0 421.8 L592.7 400.0 Z" fill="#4080b8" stroke="#28c850" stroke-width="1.300" stroke-linejoin="round"/><path d="M578.5 502.6 L752.0 556.0 M578.0 505.4 L751.0 558.8" stroke="#28c850" stroke-width="1.100" fill="none"/><path d="M586.0 507.0 C616.0 512.0 706.0 542.0 741.0 556.0" stroke="#28c850" stroke-width=".8" fill="none" opacity=".8"/><path d="M656.0 528.0 l12 1 m-12 -1 l9 7 M670.0 532.0 l-11 -1 m11 1 l-8 -7 M586.0 452.0 l3 -9 l4 8 M746.0 590.0 l2 9 l4 -8 M770.0 452.0 l2 -9 l4 8 M560.0 620.0 l2 -9 l4 8 M645.0 660.0 l-10 3 l9 4" stroke="#28c850" stroke-width="1" fill="none"/><path d="M636.0 663.0 C651.0 657.0 691.0 657.0 716.0 662.0" stroke="#28c850" stroke-width="1" fill="none"/>
<path d="M958.0 400.0 L957.4 434.4 L954.9 465.9 L949.3 503.7 L942.3 532.0 L936.7 560.3 L929.7 591.8 L926.0 623.3 L923.4 663.0 L742.5 663.0 L744.0 623.3 L747.2 591.8 L751.9 560.3 L758.2 532.0 L764.5 503.7 L769.2 478.5 L775.5 447.0 L778.0 421.8 L778.7 400.0 Z" fill="#4080b8" stroke="#28c850" stroke-width="1.300" stroke-linejoin="round"/><path d="M764.5 502.6 L938.0 556.0 M764.0 505.4 L937.0 558.8" stroke="#28c850" stroke-width="1.100" fill="none"/><path d="M772.0 507.0 C802.0 512.0 892.0 542.0 927.0 556.0" stroke="#28c850" stroke-width=".8" fill="none" opacity=".8"/><path d="M842.0 528.0 l12 1 m-12 -1 l9 7 M856.0 532.0 l-11 -1 m11 1 l-8 -7 M772.0 452.0 l3 -9 l4 8 M932.0 590.0 l2 9 l4 -8 M956.0 452.0 l2 -9 l4 8 M746.0 620.0 l2 -9 l4 8 M831.0 660.0 l-10 3 l9 4" stroke="#28c850" stroke-width="1" fill="none"/><path d="M822.0 663.0 C837.0 657.0 877.0 657.0 902.0 662.0" stroke="#28c850" stroke-width="1" fill="none"/>
<path d="M1144.0 400.0 L1143.4 434.4 L1140.9 465.9 L1135.3 503.7 L1128.3 532.0 L1122.7 560.3 L1115.7 591.8 L1112.0 623.3 L1109.4 663.0 L928.5 663.0 L930.0 623.3 L933.2 591.8 L937.9 560.3 L944.2 532.0 L950.5 503.7 L955.2 478.5 L961.5 447.0 L964.0 421.8 L964.7 400.0 Z" fill="#4080b8" stroke="#28c850" stroke-width="1.300" stroke-linejoin="round"/><path d="M950.5 502.6 L1124.0 556.0 M950.0 505.4 L1123.0 558.8" stroke="#28c850" stroke-width="1.100" fill="none"/><path d="M958.0 507.0 C988.0 512.0 1078.0 542.0 1113.0 556.0" stroke="#28c850" stroke-width=".8" fill="none" opacity=".8"/><path d="M1028.0 528.0 l12 1 m-12 -1 l9 7 M1042.0 532.0 l-11 -1 m11 1 l-8 -7 M958.0 452.0 l3 -9 l4 8 M1118.0 590.0 l2 9 l4 -8 M1142.0 452.0 l2 -9 l4 8 M932.0 620.0 l2 -9 l4 8 M1017.0 660.0 l-10 3 l9 4" stroke="#28c850" stroke-width="1" fill="none"/><path d="M1008.0 663.0 C1023.0 657.0 1063.0 657.0 1088.0 662.0" stroke="#28c850" stroke-width="1" fill="none"/>
<path d="M1330.0 400.0 L1329.4 434.4 L1326.9 465.9 L1321.3 503.7 L1314.3 532.0 L1308.7 560.3 L1301.7 591.8 L1298.0 623.3 L1295.4 663.0 L1114.5 663.0 L1116.0 623.3 L1119.2 591.8 L1123.9 560.3 L1130.2 532.0 L1136.5 503.7 L1141.2 478.5 L1147.5 447.0 L1150.0 421.8 L1150.7 400.0 Z" fill="#4080b8" stroke="#28c850" stroke-width="1.300" stroke-linejoin="round"/><path d="M1136.5 502.6 L1310.0 556.0 M1136.0 505.4 L1309.0 558.8" stroke="#28c850" stroke-width="1.100" fill="none"/><path d="M1144.0 507.0 C1174.0 512.0 1264.0 542.0 1299.0 556.0" stroke="#28c850" stroke-width=".8" fill="none" opacity=".8"/><path d="M1214.0 528.0 l12 1 m-12 -1 l9 7 M1228.0 532.0 l-11 -1 m11 1 l-8 -7 M1144.0 452.0 l3 -9 l4 8 M1304.0 590.0 l2 9 l4 -8 M1328.0 452.0 l2 -9 l4 8 M1118.0 620.0 l2 -9 l4 8 M1203.0 660.0 l-10 3 l9 4" stroke="#28c850" stroke-width="1" fill="none"/><path d="M1194.0 663.0 C1209.0 657.0 1249.0 657.0 1274.0 662.0" stroke="#28c850" stroke-width="1" fill="none"/>
<path d="M1516.0 400.0 L1515.4 434.4 L1512.9 465.9 L1507.3 503.7 L1500.3 532.0 L1494.7 560.3 L1487.7 591.8 L1484.0 623.3 L1481.4 663.0 L1300.5 663.0 L1302.0 623.3 L1305.2 591.8 L1309.9 560.3 L1316.2 532.0 L1322.5 503.7 L1327.2 478.5 L1333.5 447.0 L1336.0 421.8 L1336.7 400.0 Z" fill="#4080b8" stroke="#28c850" stroke-width="1.300" stroke-linejoin="round"/><path d="M1322.5 502.6 L1496.0 556.0 M1322.0 505.4 L1495.0 558.8" stroke="#28c850" stroke-width="1.100" fill="none"/><path d="M1330.0 507.0 C1360.0 512.0 1450.0 542.0 1485.0 556.0" stroke="#28c850" stroke-width=".8" fill="none" opacity=".8"/><path d="M1400.0 528.0 l12 1 m-12 -1 l9 7 M1414.0 532.0 l-11 -1 m11 1 l-8 -7 M1330.0 452.0 l3 -9 l4 8 M1490.0 590.0 l2 9 l4 -8 M1514.0 452.0 l2 -9 l4 8 M1304.0 620.0 l2 -9 l4 8 M1389.0 660.0 l-10 3 l9 4" stroke="#28c850" stroke-width="1" fill="none"/><path d="M1380.0 663.0 C1395.0 657.0 1435.0 657.0 1460.0 662.0" stroke="#28c850" stroke-width="1" fill="none"/>
<path d="M370 663 H1482" stroke="#34d060" stroke-width="1.600"/>
<clipPath id="pc"><rect x="371" y="355" width="1190" height="307"/></clipPath><g clip-path="url(#pc)"><path d="M409.6 356.3 L421.0 367.6 L430.4 375.1 L439.8 380.7 L447.3 384.9 L458.5 386.8 L467.9 387.2 L477.3 387.0 L486.7 386.1 L496.0 384.6 L505.4 382.7 L505.4 384.4 L496.0 388.2 L486.7 391.9 L477.3 394.5 L467.9 396.4 L458.5 397.5 L444.5 398.3 L430.4 398.0 L411.7 397.1 L392.9 395.2 L378.8 392.9 L370.4 391.5 Z M395.7 387.7 L408.9 369.9 L431.8 389.1 Z" fill="url(#tt)" fill-rule="evenodd" stroke="#24b452" stroke-width="1" stroke-opacity=".8" stroke-linejoin="round"/><path d="M427.6 369.9 L439.8 365.2 L449.2 361.9 L458.5 359.6 L467.9 357.7 L482.0 356.1 L496.0 355.8 L514.8 356.8 L533.5 358.6 L544.8 360.1 L566.6 362.5 L526.0 399.4 L514.8 389.1 L505.4 380.7 L496.0 374.6 L486.7 370.8 L477.3 368.7 L467.9 367.7 L458.5 367.7 L449.2 368.7 L439.8 370.6 L430.4 373.2 Z M503.5 366.6 L538.1 367.1 L526.0 385.3 Z" fill="url(#tt)" fill-rule="evenodd" stroke="#24b452" stroke-width="1" stroke-opacity=".8" stroke-linejoin="round"/>
<path d="M575.6 356.3 L587.0 367.6 L596.4 375.1 L605.8 380.7 L613.3 384.9 L624.5 386.8 L633.9 387.2 L643.3 387.0 L652.7 386.1 L662.0 384.6 L671.4 382.7 L671.4 384.4 L662.0 388.2 L652.7 391.9 L643.3 394.5 L633.9 396.4 L624.5 397.5 L610.5 398.3 L596.4 398.0 L577.7 397.1 L558.9 395.2 L544.8 392.9 L536.4 391.5 Z M561.7 387.7 L574.9 369.9 L597.8 389.1 Z" fill="url(#tt)" fill-rule="evenodd" stroke="#24b452" stroke-width="1" stroke-opacity=".8" stroke-linejoin="round"/><path d="M593.6 369.9 L605.8 365.2 L615.2 361.9 L624.5 359.6 L633.9 357.7 L648.0 356.1 L662.0 355.8 L680.8 356.8 L699.5 358.6 L710.8 360.1 L732.6 362.5 L692.0 399.4 L680.8 389.1 L671.4 380.7 L662.0 374.6 L652.7 370.8 L643.3 368.7 L633.9 367.7 L624.5 367.7 L615.2 368.7 L605.8 370.6 L596.4 373.2 Z M669.5 366.6 L704.1 367.1 L692.0 385.3 Z" fill="url(#tt)" fill-rule="evenodd" stroke="#24b452" stroke-width="1" stroke-opacity=".8" stroke-linejoin="round"/>
<path d="M741.6 356.3 L753.0 367.6 L762.4 375.1 L771.8 380.7 L779.3 384.9 L790.5 386.8 L799.9 387.2 L809.3 387.0 L818.7 386.1 L828.0 384.6 L837.4 382.7 L837.4 384.4 L828.0 388.2 L818.7 391.9 L809.3 394.5 L799.9 396.4 L790.5 397.5 L776.5 398.3 L762.4 398.0 L743.7 397.1 L724.9 395.2 L710.8 392.9 L702.4 391.5 Z M727.7 387.7 L740.9 369.9 L763.8 389.1 Z" fill="url(#tt)" fill-rule="evenodd" stroke="#24b452" stroke-width="1" stroke-opacity=".8" stroke-linejoin="round"/><path d="M759.6 369.9 L771.8 365.2 L781.2 361.9 L790.5 359.6 L799.9 357.7 L814.0 356.1 L828.0 355.8 L846.8 356.8 L865.5 358.6 L876.8 360.1 L898.6 362.5 L858.0 399.4 L846.8 389.1 L837.4 380.7 L828.0 374.6 L818.7 370.8 L809.3 368.7 L799.9 367.7 L790.5 367.7 L781.2 368.7 L771.8 370.6 L762.4 373.2 Z M835.5 366.6 L870.1 367.1 L858.0 385.3 Z" fill="url(#tt)" fill-rule="evenodd" stroke="#24b452" stroke-width="1" stroke-opacity=".8" stroke-linejoin="round"/>
<path d="M907.7 356.3 L919.1 367.6 L928.5 375.1 L937.9 380.7 L945.4 384.9 L956.6 386.8 L966.0 387.2 L975.4 387.0 L984.8 386.1 L994.1 384.6 L1003.5 382.7 L1003.5 384.4 L994.1 388.2 L984.8 391.9 L975.4 394.5 L966.0 396.4 L956.6 397.5 L942.6 398.3 L928.5 398.0 L909.8 397.1 L891.0 395.2 L876.9 392.9 L868.5 391.5 Z M893.8 387.7 L907.0 369.9 L929.9 389.1 Z" fill="url(#tt)" fill-rule="evenodd" stroke="#24b452" stroke-width="1" stroke-opacity=".8" stroke-linejoin="round"/><path d="M925.7 369.9 L937.9 365.2 L947.3 361.9 L956.6 359.6 L966.0 357.7 L980.1 356.1 L994.1 355.8 L1012.9 356.8 L1031.6 358.6 L1042.9 360.1 L1064.7 362.5 L1024.1 399.4 L1012.9 389.1 L1003.5 380.7 L994.1 374.6 L984.8 370.8 L975.4 368.7 L966.0 367.7 L956.6 367.7 L947.3 368.7 L937.9 370.6 L928.5 373.2 Z M1001.6 366.6 L1036.2 367.1 L1024.1 385.3 Z" fill="url(#tt)" fill-rule="evenodd" stroke="#24b452" stroke-width="1" stroke-opacity=".8" stroke-linejoin="round"/>
<path d="M1073.7 356.3 L1085.1 367.6 L1094.5 375.1 L1103.9 380.7 L1111.4 384.9 L1122.6 386.8 L1132.0 387.2 L1141.4 387.0 L1150.8 386.1 L1160.1 384.6 L1169.5 382.7 L1169.5 384.4 L1160.1 388.2 L1150.8 391.9 L1141.4 394.5 L1132.0 396.4 L1122.6 397.5 L1108.6 398.3 L1094.5 398.0 L1075.8 397.1 L1057.0 395.2 L1042.9 392.9 L1034.5 391.5 Z M1059.8 387.7 L1073.0 369.9 L1095.9 389.1 Z" fill="url(#tt)" fill-rule="evenodd" stroke="#24b452" stroke-width="1" stroke-opacity=".8" stroke-linejoin="round"/><path d="M1091.7 369.9 L1103.9 365.2 L1113.3 361.9 L1122.6 359.6 L1132.0 357.7 L1146.1 356.1 L1160.1 355.8 L1178.9 356.8 L1197.6 358.6 L1208.9 360.1 L1230.7 362.5 L1190.1 399.4 L1178.9 389.1 L1169.5 380.7 L1160.1 374.6 L1150.8 370.8 L1141.4 368.7 L1132.0 367.7 L1122.6 367.7 L1113.3 368.7 L1103.9 370.6 L1094.5 373.2 Z M1167.6 366.6 L1202.2 367.1 L1190.1 385.3 Z" fill="url(#tt)" fill-rule="evenodd" stroke="#24b452" stroke-width="1" stroke-opacity=".8" stroke-linejoin="round"/>
<path d="M1239.7 356.3 L1251.1 367.6 L1260.5 375.1 L1269.9 380.7 L1277.4 384.9 L1288.6 386.8 L1298.0 387.2 L1307.4 387.0 L1316.8 386.1 L1326.1 384.6 L1335.5 382.7 L1335.5 384.4 L1326.1 388.2 L1316.8 391.9 L1307.4 394.5 L1298.0 396.4 L1288.6 397.5 L1274.6 398.3 L1260.5 398.0 L1241.8 397.1 L1223.0 395.2 L1208.9 392.9 L1200.5 391.5 Z M1225.8 387.7 L1239.0 369.9 L1261.9 389.1 Z" fill="url(#tt)" fill-rule="evenodd" stroke="#24b452" stroke-width="1" stroke-opacity=".8" stroke-linejoin="round"/><path d="M1257.7 369.9 L1269.9 365.2 L1279.3 361.9 L1288.6 359.6 L1298.0 357.7 L1312.1 356.1 L1326.1 355.8 L1344.9 356.8 L1363.6 358.6 L1374.9 360.1 L1396.7 362.5 L1356.1 399.4 L1344.9 389.1 L1335.5 380.7 L1326.1 374.6 L1316.8 370.8 L1307.4 368.7 L1298.0 367.7 L1288.6 367.7 L1279.3 368.7 L1269.9 370.6 L1260.5 373.2 Z M1333.6 366.6 L1368.2 367.1 L1356.1 385.3 Z" fill="url(#tt)" fill-rule="evenodd" stroke="#24b452" stroke-width="1" stroke-opacity=".8" stroke-linejoin="round"/>
<path d="M1405.7 356.3 L1417.1 367.6 L1426.5 375.1 L1435.9 380.7 L1443.4 384.9 L1454.6 386.8 L1464.0 387.2 L1473.4 387.0 L1482.8 386.1 L1492.1 384.6 L1501.5 382.7 L1501.5 384.4 L1492.1 388.2 L1482.8 391.9 L1473.4 394.5 L1464.0 396.4 L1454.6 397.5 L1440.6 398.3 L1426.5 398.0 L1407.8 397.1 L1389.0 395.2 L1374.9 392.9 L1366.5 391.5 Z M1391.8 387.7 L1405.0 369.9 L1427.9 389.1 Z" fill="url(#tt)" fill-rule="evenodd" stroke="#24b452" stroke-width="1" stroke-opacity=".8" stroke-linejoin="round"/><path d="M1423.7 369.9 L1435.9 365.2 L1445.3 361.9 L1454.6 359.6 L1464.0 357.7 L1478.1 356.1 L1492.1 355.8 L1510.9 356.8 L1529.6 358.6 L1540.9 360.1 L1562.7 362.5 L1522.1 399.4 L1510.9 389.1 L1501.5 380.7 L1492.1 374.6 L1482.8 370.8 L1473.4 368.7 L1464.0 367.7 L1454.6 367.7 L1445.3 368.7 L1435.9 370.6 L1426.5 373.2 Z M1499.6 366.6 L1534.2 367.1 L1522.1 385.3 Z" fill="url(#tt)" fill-rule="evenodd" stroke="#24b452" stroke-width="1" stroke-opacity=".8" stroke-linejoin="round"/>
</g>
<path d="M1550.7 390.9 L1548.6 403.1 L1542.4 410.7 L1531.7 421.5 L1520.1 436.7 L1518.9 440.4 L1524.1 447.4 L1531.7 456.6 L1540.9 467.3 L1547.0 476.5 L1549.5 485.7 L1550.7 492.4 L1554.7 493.6 L1558.0 491.2 L1559.3 479.6 L1556.2 467.3 L1548.6 455.1 L1540.9 445.9 L1538.5 436.7 L1544.0 427.6 L1550.1 418.4 L1557.7 406.2 L1559.3 393.9 L1557.7 388.4 L1553.1 387.8 Z M1522.6 440.4 a3 3 0 1 0 6 0 a3 3 0 1 0 -6 0Z" fill="#8c7e8e" fill-rule="evenodd" stroke="#24b452" stroke-width=".9" stroke-opacity=".7" stroke-linejoin="round"/>
<path d="M1516.500 464.300 L1551.600 496.400 L1531.700 520.800 C1524 540 1519 570 1527 600.400 C1516 575 1510 540 1513.400 491.800 Z M1520 481 L1543.400 496.400 L1522 520.800 Z" fill="url(#tt)" fill-rule="evenodd" stroke="#20b050" stroke-width=".9" stroke-opacity=".75"/>
<path d="M1536.300 522.400 C1548 560 1553 610 1545 663 L1528.700 647.800 L1511 623.900 L1528.700 598.800 C1538 580 1540 555 1536.300 522.400 Z M1541 600.400 L1523.200 623.900 L1540.300 640 Z" fill="url(#tt)" fill-rule="evenodd" stroke="#20b050" stroke-width=".9" stroke-opacity=".75"/>
<clipPath id="bc"><rect x="371" y="401" width="1146" height="261"/></clipPath><g clip-path="url(#bc)"><g stroke="#a8d0f0" stroke-width="1" stroke-dasharray="4 2" opacity="0.28"><path d="M369.5 151 V867"/><path d="M488.5 151 V867"/><path d="M607.5 151 V867"/><path d="M727.5 151 V867"/><path d="M846.5 151 V867"/><path d="M965.5 151 V867"/><path d="M1084.5 151 V867"/><path d="M1204.5 151 V867"/><path d="M1323.5 151 V867"/><path d="M1442.5 151 V867"/><path d="M1561.5 151 V867"/><path d="M350 787.5 H1582"/><path d="M350 663.5 H1582"/><path d="M350 539.5 H1582"/><path d="M350 415.5 H1582"/><path d="M350 292.5 H1582"/><path d="M350 168.5 H1582"/></g>
</g>
<g fill="#fff"><circle cx="370.0" cy="663.0" r="3.600"/><circle cx="556.0" cy="663.0" r="3.600"/><circle cx="742.0" cy="663.0" r="3.600"/><circle cx="928.0" cy="663.0" r="3.600"/><circle cx="1114.0" cy="663.0" r="3.600"/><circle cx="1301.0" cy="663.0" r="3.600"/><circle cx="1545.0" cy="663.0" r="3.600"/><circle cx="586.0" cy="400.5" r="3.600"/><circle cx="772.0" cy="400.5" r="3.600"/><circle cx="958.0" cy="400.5" r="3.600"/><circle cx="1144.0" cy="400.5" r="3.600"/><circle cx="1330.0" cy="400.5" r="3.600"/><circle cx="1516.0" cy="400.5" r="3.600"/><circle cx="370.3" cy="390.6" r="3.600"/><circle cx="394.9" cy="388.6" r="3.600"/><circle cx="536.3" cy="390.6" r="3.600"/><circle cx="560.9" cy="388.6" r="3.600"/><circle cx="539.4" cy="367.5" r="3.600"/><circle cx="564.6" cy="364.2" r="3.600"/><circle cx="702.3" cy="390.6" r="3.600"/><circle cx="726.9" cy="388.6" r="3.600"/><circle cx="705.4" cy="367.5" r="3.600"/><circle cx="730.6" cy="364.2" r="3.600"/><circle cx="868.4" cy="390.6" r="3.600"/><circle cx="893.0" cy="388.6" r="3.600"/><circle cx="871.5" cy="367.5" r="3.600"/><circle cx="896.7" cy="364.2" r="3.600"/><circle cx="1034.4" cy="390.6" r="3.600"/><circle cx="1059.0" cy="388.6" r="3.600"/><circle cx="1037.5" cy="367.5" r="3.600"/><circle cx="1062.7" cy="364.2" r="3.600"/><circle cx="1200.4" cy="390.6" r="3.600"/><circle cx="1225.0" cy="388.6" r="3.600"/><circle cx="1203.5" cy="367.5" r="3.600"/><circle cx="1228.7" cy="364.2" r="3.600"/><circle cx="1366.4" cy="390.6" r="3.600"/><circle cx="1391.0" cy="388.6" r="3.600"/><circle cx="1369.5" cy="367.5" r="3.600"/><circle cx="1394.7" cy="364.2" r="3.600"/><circle cx="1536.3" cy="367.0" r="3.600"/><circle cx="1561.4" cy="364.9" r="3.600"/><circle cx="1555.6" cy="390.0" r="3.600"/><circle cx="1518.0" cy="458.0" r="3.600"/><circle cx="1521.0" cy="484.0" r="3.600"/><circle cx="1541.8" cy="637.0" r="3.600"/></g>
<g fill="#f0dc54" stroke="#f0dc54" stroke-width=".25" font-weight="300" letter-spacing=".45" font-size="21px" font-family="Liberation Sans, Noto Sans CJK SC, sans-serif"><text x="1335" y="176" id="ct1">钢板Q235-1mm-空气</text><text x="1401" y="783">同层共边</text><text x="1401" y="809">外框最后共边</text></g>
<path d="M401.500 775 V815.500 H438" stroke="#e8e8e8" stroke-width="1.200" fill="none"/><g fill="#e8e8e8" font-size="15px" font-family="Liberation Sans, sans-serif"><text x="399" y="773">Y</text><text x="440" y="815">X</text></g>
<rect x="330" y="129" width="1252" height="1" fill="#464646"/><rect x="330" y="130" width="1252" height="21" fill="url(#rt)"/><rect x="330" y="130" width="20" height="737" fill="url(#rt)"/>
<g stroke="#e8e8e8" stroke-width="1"><path d="M369.5 130 V151"/><path d="M393.5 146 V151"/><path d="M417.5 146 V151"/><path d="M441.5 146 V151"/><path d="M464.5 146 V151"/><path d="M488.5 141 V151"/><path d="M512.5 146 V151"/><path d="M536.5 146 V151"/><path d="M560.5 146 V151"/><path d="M584.5 146 V151"/><path d="M607.5 130 V151"/><path d="M631.5 146 V151"/><path d="M655.5 146 V151"/><path d="M679.5 146 V151"/><path d="M703.5 146 V151"/><path d="M727.5 141 V151"/><path d="M751.5 146 V151"/><path d="M774.5 146 V151"/><path d="M798.5 146 V151"/><path d="M822.5 146 V151"/><path d="M846.5 130 V151"/><path d="M870.5 146 V151"/><path d="M894.5 146 V151"/><path d="M917.5 146 V151"/><path d="M941.5 146 V151"/><path d="M965.5 141 V151"/><path d="M989.5 146 V151"/><path d="M1013.5 146 V151"/><path d="M1037.5 146 V151"/><path d="M1060.5 146 V151"/><path d="M1084.5 130 V151"/><path d="M1108.5 146 V151"/><path d="M1132.5 146 V151"/><path d="M1156.5 146 V151"/><path d="M1180.5 146 V151"/><path d="M1204.5 141 V151"/><path d="M1227.5 146 V151"/><path d="M1251.5 146 V151"/><path d="M1275.5 146 V151"/><path d="M1299.5 146 V151"/><path d="M1323.5 130 V151"/><path d="M1347.5 146 V151"/><path d="M1370.5 146 V151"/><path d="M1394.5 146 V151"/><path d="M1418.5 146 V151"/><path d="M1442.5 141 V151"/><path d="M1466.5 146 V151"/><path d="M1490.5 146 V151"/><path d="M1514.5 146 V151"/><path d="M1537.5 146 V151"/><path d="M1561.5 130 V151"/><path d="M343 861.5 H350"/><path d="M343 836.5 H350"/><path d="M343 812.5 H350"/><path d="M338 787.5 H350"/><path d="M343 762.5 H350"/><path d="M343 737.5 H350"/><path d="M343 713.5 H350"/><path d="M343 688.5 H350"/><path d="M330 663.5 H350"/><path d="M343 638.5 H350"/><path d="M343 614.5 H350"/><path d="M343 589.5 H350"/><path d="M343 564.5 H350"/><path d="M338 539.5 H350"/><path d="M343 514.5 H350"/><path d="M343 490.5 H350"/><path d="M343 465.5 H350"/><path d="M343 440.5 H350"/><path d="M330 415.5 H350"/><path d="M343 391.5 H350"/><path d="M343 366.5 H350"/><path d="M343 341.5 H350"/><path d="M343 316.5 H350"/><path d="M338 292.5 H350"/><path d="M343 267.5 H350"/><path d="M343 242.5 H350"/><path d="M343 217.5 H350"/><path d="M343 192.5 H350"/><path d="M330 168.5 H350"/></g>
<g fill="#f0f0f0" font-size="13.500px" font-family="Liberation Sans, sans-serif" letter-spacing=".3"><text x="371.5" y="142.500">0</text><text x="609.9" y="142.500">2000</text><text x="848.4" y="142.500">4000</text><text x="1086.8" y="142.500">6000</text><text x="1325.3" y="142.500">8000</text><text x="1563.7" y="142.500">10000</text><text transform="translate(342 166.6) rotate(-90)">40</text><text transform="translate(342 413.8) rotate(-90)">2000</text><text transform="translate(342 661.0) rotate(-90)">0</text></g>
</svg>
</div>
<div class="t" style="left:1586px;top:136px" id="rh">板材<span style="letter-spacing:0.35px">(1</span>种<span style="letter-spacing:0.35px">,</span>勾选<span style="letter-spacing:0.35px">1</span>种<span style="letter-spacing:0.35px">,</span>共<span style="letter-spacing:0.35px">200</span>张<span style="letter-spacing:0.35px">,</span>已排<span style="letter-spacing:0.35px">54</span>张<span style="letter-spacing:0.35px">)</span></div>
<svg style="left:1586px;top:158px" width="330" height="22" viewBox="0 0 330 22"><path d="M12 3.500 V16.500 M5.500 10 H18.500" stroke="#fff" stroke-width="3.200"/><path d="M47 10 H61" stroke="#fff" stroke-width="3"/><path d="M90 3 L90 16 L93.500 13 L96 18.500 L98.500 17.300 L96 12 L100.500 11.500 Z" fill="#111" stroke="#eee" stroke-width="1.100" transform="rotate(-8 95 10)"/><path d="M131 5 H144 M131 9.500 H141 M131 14 H138" stroke="#d8d8d8" stroke-width="1.800"/><path d="M142.500 11 V17 M140.500 15 L142.500 17.500 L144.500 15" stroke="#bbb" stroke-width="1.100" fill="none"/><path d="M173 5 H186 M173 9.500 H183 M173 14 H180" stroke="#d8d8d8" stroke-width="1.800"/><path d="M184.500 11 V17 M182.500 15 L184.500 17.500 L186.500 15" stroke="#bbb" stroke-width="1.100" fill="none"/></svg><div class="tri" style="left:1610px;top:166px;transform:scale(.85)"></div><div class="tri" style="left:1652px;top:166px;transform:scale(.85)"></div><div class="tri" style="left:1694px;top:166px;transform:scale(.85)"></div><div class="tri" style="left:1736px;top:166px;transform:scale(.85)"></div><div class="tri" style="left:1778px;top:166px;transform:scale(.85)"></div>
<div class="a" style="left:1586px;top:183px;width:332px;height:865px;background:#5a5a5a;overflow:hidden">
<div class="a" style="left:318px;top:0;width:13px;height:867px;background:#5a5a5a"></div><div class="a" style="left:318.500px;top:0;width:11px;height:188px;background:#383838;border-radius:5.500px"></div>
<div class="a" style="left:0;top:0;width:318px;height:148px;background:#1e7be0;box-sizing:border-box;border:1px solid #3cc8a0"></div><div class="t" style="left:1px;top:5.0px">1</div><div class="cb" style="left:4px;top:66px"><svg width="14" height="14" viewBox="0 0 14 14"><path d="M2.500 7 L6 10.500 L11.500 3.500" fill="none" stroke="#111" stroke-width="1.700"/></svg></div><div class="a" style="left:36px;top:58.5px"><svg width="116" height="32" viewBox="0 0 116 32"><rect x="0" y="0" width="116" height="31.500" rx="1.500" fill="#15242e"/><path d="M5.5 6.500 L19.5 6.500 L18.5 18.500 L4.5 14 Z M4.0 16.500 L18.2 21 L17.0 29.500 L2.5 29.500 Z" fill="#52a4f2"/><path d="M23.4 6.500 L37.4 6.500 L36.4 18.500 L22.4 14 Z M21.9 16.500 L36.1 21 L34.9 29.500 L20.4 29.500 Z" fill="#52a4f2"/><path d="M41.3 6.500 L55.3 6.500 L54.3 18.500 L40.3 14 Z M39.8 16.500 L54.0 21 L52.8 29.500 L38.3 29.500 Z" fill="#52a4f2"/><path d="M59.2 6.500 L73.2 6.500 L72.2 18.500 L58.2 14 Z M57.7 16.500 L71.9 21 L70.7 29.500 L56.2 29.500 Z" fill="#52a4f2"/><path d="M77.1 6.500 L91.1 6.500 L90.1 18.500 L76.1 14 Z M75.6 16.500 L89.8 21 L88.6 29.500 L74.1 29.500 Z" fill="#52a4f2"/><path d="M95.0 6.500 L109.0 6.500 L108.0 18.500 L94.0 14 Z M93.5 16.500 L107.7 21 L106.5 29.500 L92.0 29.500 Z" fill="#52a4f2"/></svg></div><div class="t" style="left:165px;top:5.0px;width:152px;overflow:hidden">名称<span style="letter-spacing:0.6px">:</span>排样结果<span style="letter-spacing:0.6px">1</span></div><div class="t" style="left:165px;top:29.5px;width:152px;overflow:hidden">利用率<span style="letter-spacing:0.6px">:86.431%&nbsp; </span>零件数<span style="letter-spacing:0.6px">:2</span></div><div class="t" style="left:165px;top:54.0px;width:152px;overflow:hidden">板材尺寸<span style="letter-spacing:0.6px">:10000mm*2500</span></div><div class="t" style="left:165px;top:78.5px;width:152px;overflow:hidden">实际尺寸<span style="letter-spacing:0.6px">:9989.731mm*2</span></div><div class="t" style="left:165px;top:103.0px;width:152px;overflow:hidden">数量<span style="letter-spacing:0.6px">:6</span></div><div class="t" style="left:165px;top:127.5px;width:152px;overflow:hidden">钢板<span style="letter-spacing:0.6px">Q235-1mm-</span>空气</div>
<div class="t" style="left:1px;top:152.5px">2</div><div class="cb" style="left:4px;top:214px"><svg width="14" height="14" viewBox="0 0 14 14"><path d="M2.500 7 L6 10.500 L11.500 3.500" fill="none" stroke="#111" stroke-width="1.700"/></svg></div><div class="a" style="left:36px;top:206.0px"><svg width="116" height="32" viewBox="0 0 116 32"><rect x="0" y="0" width="116" height="31.500" rx="1.500" fill="#15242e"/><path d="M5.5 6.500 L19.5 6.500 L18.5 18.500 L4.5 14 Z M4.0 16.500 L18.2 21 L17.0 29.500 L2.5 29.500 Z" fill="#4d9bde"/><path d="M23.4 6.500 L37.4 6.500 L36.4 18.500 L22.4 14 Z M21.9 16.500 L36.1 21 L34.9 29.500 L20.4 29.500 Z" fill="#4d9bde"/><path d="M41.3 6.500 L55.3 6.500 L54.3 18.500 L40.3 14 Z M39.8 16.500 L54.0 21 L52.8 29.500 L38.3 29.500 Z" fill="#4d9bde"/><path d="M59.2 6.500 L73.2 6.500 L72.2 18.500 L58.2 14 Z M57.7 16.500 L71.9 21 L70.7 29.500 L56.2 29.500 Z" fill="#4d9bde"/><path d="M77.1 6.500 L91.1 6.500 L90.1 18.500 L76.1 14 Z M75.6 16.500 L89.8 21 L88.6 29.500 L74.1 29.500 Z" fill="#4d9bde"/><path d="M95.0 6.500 L109.0 6.500 L108.0 18.500 L94.0 14 Z M93.5 16.500 L107.7 21 L106.5 29.500 L92.0 29.500 Z" fill="#4d9bde"/></svg></div><div class="t" style="left:165px;top:152.5px;width:152px;overflow:hidden">名称<span style="letter-spacing:0.6px">:</span>排样结果<span style="letter-spacing:0.6px">2</span></div><div class="t" style="left:165px;top:177.0px;width:152px;overflow:hidden">利用率<span style="letter-spacing:0.6px">:85.506%&nbsp; </span>零件数<span style="letter-spacing:0.6px">:3</span></div><div class="t" style="left:165px;top:201.5px;width:152px;overflow:hidden">板材尺寸<span style="letter-spacing:0.6px">:10000mm*2500</span></div><div class="t" style="left:165px;top:226.0px;width:152px;overflow:hidden">实际尺寸<span style="letter-spacing:0.6px">:9971.122mm*2</span></div><div class="t" style="left:165px;top:250.5px;width:152px;overflow:hidden">数量<span style="letter-spacing:0.6px">:1</span></div><div class="t" style="left:165px;top:275.0px;width:152px;overflow:hidden">钢板<span style="letter-spacing:0.6px">Q235-1mm-</span>空气</div>
<div class="t" style="left:1px;top:300.0px">3</div><div class="cb" style="left:4px;top:361px"><svg width="14" height="14" viewBox="0 0 14 14"><path d="M2.500 7 L6 10.500 L11.500 3.500" fill="none" stroke="#111" stroke-width="1.700"/></svg></div><div class="a" style="left:36px;top:353.5px"><svg width="116" height="32" viewBox="0 0 116 32"><rect x="0" y="0" width="116" height="31.500" rx="1.500" fill="#15242e"/><path d="M5.5 6.500 L19.5 6.500 L18.5 18.500 L4.5 14 Z M4.0 16.500 L18.2 21 L17.0 29.500 L2.5 29.500 Z" fill="#4d9bde"/><path d="M23.4 6.500 L37.4 6.500 L36.4 18.500 L22.4 14 Z M21.9 16.500 L36.1 21 L34.9 29.500 L20.4 29.500 Z" fill="#4d9bde"/><path d="M41.3 6.500 L55.3 6.500 L54.3 18.500 L40.3 14 Z M39.8 16.500 L54.0 21 L52.8 29.500 L38.3 29.500 Z" fill="#4d9bde"/><path d="M59.2 6.500 L73.2 6.500 L72.2 18.500 L58.2 14 Z M57.7 16.500 L71.9 21 L70.7 29.500 L56.2 29.500 Z" fill="#4d9bde"/><path d="M77.1 6.500 L91.1 6.500 L90.1 18.500 L76.1 14 Z M75.6 16.500 L89.8 21 L88.6 29.500 L74.1 29.500 Z" fill="#4d9bde"/><path d="M95.0 6.500 L109.0 6.500 L108.0 18.500 L94.0 14 Z M93.5 16.500 L107.7 21 L106.5 29.500 L92.0 29.500 Z" fill="#4d9bde"/></svg></div><div class="t" style="left:165px;top:300.0px;width:152px;overflow:hidden">名称<span style="letter-spacing:0.6px">:</span>排样结果<span style="letter-spacing:0.6px">3</span></div><div class="t" style="left:165px;top:324.5px;width:152px;overflow:hidden">利用率<span style="letter-spacing:0.6px">:86.07%&nbsp; </span>零件数<span style="letter-spacing:0.6px">:34</span></div><div class="t" style="left:165px;top:349.0px;width:152px;overflow:hidden">板材尺寸<span style="letter-spacing:0.6px">:10000mm*2500</span></div><div class="t" style="left:165px;top:373.5px;width:152px;overflow:hidden">实际尺寸<span style="letter-spacing:0.6px">:9978.885mm*2</span></div><div class="t" style="left:165px;top:398.0px;width:152px;overflow:hidden">数量<span style="letter-spacing:0.6px">:1</span></div><div class="t" style="left:165px;top:422.5px;width:152px;overflow:hidden">钢板<span style="letter-spacing:0.6px">Q235-1mm-</span>空气</div>
<div class="t" style="left:1px;top:447.5px">4</div><div class="cb" style="left:4px;top:508px"><svg width="14" height="14" viewBox="0 0 14 14"><path d="M2.500 7 L6 10.500 L11.500 3.500" fill="none" stroke="#111" stroke-width="1.700"/></svg></div><div class="a" style="left:36px;top:501.0px"><svg width="116" height="32" viewBox="0 0 116 32"><rect x="0" y="0" width="116" height="31.500" rx="1.500" fill="#15242e"/><path d="M5.5 6.500 L19.5 6.500 L18.5 18.500 L4.5 14 Z M4.0 16.500 L18.2 21 L17.0 29.500 L2.5 29.500 Z" fill="#4d9bde"/><path d="M23.4 6.500 L37.4 6.500 L36.4 18.500 L22.4 14 Z M21.9 16.500 L36.1 21 L34.9 29.500 L20.4 29.500 Z" fill="#4d9bde"/><path d="M41.3 6.500 L55.3 6.500 L54.3 18.500 L40.3 14 Z M39.8 16.500 L54.0 21 L52.8 29.500 L38.3 29.500 Z" fill="#2fba9c"/><path d="M59.2 6.500 L73.2 6.500 L72.2 18.500 L58.2 14 Z M57.7 16.500 L71.9 21 L70.7 29.500 L56.2 29.500 Z" fill="#2fba9c"/><path d="M77.1 6.500 L91.1 6.500 L90.1 18.500 L76.1 14 Z M75.6 16.500 L89.8 21 L88.6 29.500 L74.1 29.500 Z" fill="#2fba9c"/><path d="M95.0 6.500 L109.0 6.500 L108.0 18.500 L94.0 14 Z M93.5 16.500 L107.7 21 L106.5 29.500 L92.0 29.500 Z" fill="#2fba9c"/></svg></div><div class="t" style="left:165px;top:447.5px;width:152px;overflow:hidden">名称<span style="letter-spacing:0.6px">:</span>排样结果<span style="letter-spacing:0.6px">4</span></div><div class="t" style="left:165px;top:472.0px;width:152px;overflow:hidden">利用率<span style="letter-spacing:0.6px">:79.724%&nbsp; </span>零件数<span style="letter-spacing:0.6px">:1</span></div><div class="t" style="left:165px;top:496.5px;width:152px;overflow:hidden">板材尺寸<span style="letter-spacing:0.6px">:10000mm*2500</span></div><div class="t" style="left:165px;top:521.0px;width:152px;overflow:hidden">实际尺寸<span style="letter-spacing:0.6px">:9975.857mm*2</span></div><div class="t" style="left:165px;top:545.5px;width:152px;overflow:hidden">数量<span style="letter-spacing:0.6px">:1</span></div><div class="t" style="left:165px;top:570.0px;width:152px;overflow:hidden">钢板<span style="letter-spacing:0.6px">Q235-1mm-</span>空气</div>
<div class="t" style="left:1px;top:595.0px">5</div><div class="cb" style="left:4px;top:656px"><svg width="14" height="14" viewBox="0 0 14 14"><path d="M2.500 7 L6 10.500 L11.500 3.500" fill="none" stroke="#111" stroke-width="1.700"/></svg></div><div class="a" style="left:36px;top:648.5px"><svg width="116" height="32" viewBox="0 0 116 32"><rect x="0" y="0" width="116" height="31.500" rx="1.500" fill="#15242e"/><path d="M5.5 6.500 L19.5 6.500 L18.5 18.500 L4.5 14 Z M4.0 16.500 L18.2 21 L17.0 29.500 L2.5 29.500 Z" fill="#2fba9c"/><path d="M23.4 6.500 L37.4 6.500 L36.4 18.500 L22.4 14 Z M21.9 16.500 L36.1 21 L34.9 29.500 L20.4 29.500 Z" fill="#2fba9c"/><path d="M41.3 6.500 L55.3 6.500 L54.3 18.500 L40.3 14 Z M39.8 16.500 L54.0 21 L52.8 29.500 L38.3 29.500 Z" fill="#2fba9c"/><path d="M59.2 6.500 L73.2 6.500 L72.2 18.500 L58.2 14 Z M57.7 16.500 L71.9 21 L70.7 29.500 L56.2 29.500 Z" fill="#2fba9c"/><path d="M77.1 6.500 L91.1 6.500 L90.1 18.500 L76.1 14 Z M75.6 16.500 L89.8 21 L88.6 29.500 L74.1 29.500 Z" fill="#2fba9c"/><path d="M95.0 6.500 L109.0 6.500 L108.0 18.500 L94.0 14 Z M93.5 16.500 L107.7 21 L106.5 29.500 L92.0 29.500 Z" fill="#2fba9c"/></svg></div><div class="t" style="left:165px;top:595.0px;width:152px;overflow:hidden">名称<span style="letter-spacing:0.6px">:</span>排样结果<span style="letter-spacing:0.6px">5</span></div><div class="t" style="left:165px;top:619.5px;width:152px;overflow:hidden">利用率<span style="letter-spacing:0.6px">:85.213%&nbsp; </span>零件数<span style="letter-spacing:0.6px">:3</span></div><div class="t" style="left:165px;top:644.0px;width:152px;overflow:hidden">板材尺寸<span style="letter-spacing:0.6px">:10000mm*2500</span></div><div class="t" style="left:165px;top:668.5px;width:152px;overflow:hidden">实际尺寸<span style="letter-spacing:0.6px">:9989.99mm*24</span></div><div class="t" style="left:165px;top:693.0px;width:152px;overflow:hidden">数量<span style="letter-spacing:0.6px">:3</span></div><div class="t" style="left:165px;top:717.5px;width:152px;overflow:hidden">钢板<span style="letter-spacing:0.6px">Q235-1mm-</span>空气</div>
<div class="t" style="left:1px;top:742.5px">6</div><div class="cb" style="left:4px;top:804px"><svg width="14" height="14" viewBox="0 0 14 14"><path d="M2.500 7 L6 10.500 L11.500 3.500" fill="none" stroke="#111" stroke-width="1.700"/></svg></div><div class="a" style="left:36px;top:796.0px"><svg width="116" height="32" viewBox="0 0 116 32"><rect x="0" y="0" width="116" height="31.500" rx="1.500" fill="#15242e"/><path d="M3.5 6 L18.0 8 L17.5 16.500 L3.0 15.500 Z M3.0 18.500 L17.5 18 L18.0 28.500 L3.5 29.500 Z" fill="#2fba9c"/><path d="M21.4 6 L35.9 8 L35.4 16.500 L20.9 15.500 Z M20.9 18.500 L35.4 18 L35.9 28.500 L21.4 29.500 Z" fill="#2fba9c"/><path d="M39.3 6 L53.8 8 L53.3 16.500 L38.8 15.500 Z M38.8 18.500 L53.3 18 L53.8 28.500 L39.3 29.500 Z" fill="#2fba9c"/><path d="M57.2 6 L71.7 8 L71.2 16.500 L56.7 15.500 Z M56.7 18.500 L71.2 18 L71.7 28.500 L57.2 29.500 Z" fill="#2fba9c"/><path d="M75.1 6 L89.6 8 L89.1 16.500 L74.6 15.500 Z M74.6 18.500 L89.1 18 L89.6 28.500 L75.1 29.500 Z" fill="#2fba9c"/><path d="M93.0 6 L107.5 8 L107.0 16.500 L92.5 15.500 Z M92.5 18.500 L107.0 18 L107.5 28.500 L93.0 29.500 Z" fill="#2fba9c"/></svg></div><div class="t" style="left:165px;top:742.5px;width:152px;overflow:hidden">名称<span style="letter-spacing:0.6px">:</span>排样结果<span style="letter-spacing:0.6px">6</span></div><div class="t" style="left:165px;top:767.0px;width:152px;overflow:hidden">利用率<span style="letter-spacing:0.6px">:81.082%&nbsp; </span>零件数<span style="letter-spacing:0.6px">:1</span></div><div class="t" style="left:165px;top:791.5px;width:152px;overflow:hidden">板材尺寸<span style="letter-spacing:0.6px">:10000mm*2500</span></div><div class="t" style="left:165px;top:816.0px;width:152px;overflow:hidden">实际尺寸<span style="letter-spacing:0.6px">:9971.347mm*2</span></div><div class="t" style="left:165px;top:840.5px;width:152px;overflow:hidden">数量<span style="letter-spacing:0.6px">:4</span></div><div class="t" style="left:165px;top:865.0px;width:152px;overflow:hidden">钢板<span style="letter-spacing:0.6px">Q235-1mm-</span>空气</div>
</div>
<div class="a" style="left:330px;top:867px;width:1252px;height:33px;background:#333"></div>
<div class="a" style="left:330px;top:900px;width:1252px;height:152px;background:#5a5a5a"></div>
<div class="t" style="left:334px;top:877px">微调</div><div class="a" style="left:363px;top:872px;width:98px;height:25px;background:#fff;box-sizing:border-box;border:1px solid #999"></div><div class="t" style="left:367px;top:877px;color:#111">1</div><div class="t" style="left:363px;top:877px;width:95px;text-align:right;color:#111"><span class="l">mm</span></div>
<div class="t" style="left:464px;top:877px">旋转角度</div><div class="a" style="left:519px;top:872px;width:81px;height:25px;background:#fff;box-sizing:border-box;border:1px solid #999"></div><div class="t" style="left:523px;top:877px;color:#111">30</div><div class="t" style="left:519px;top:877px;width:78px;text-align:right;color:#111"><span style="position:relative;top:-3px;font-size:11px">°</span></div>
<svg style="left:608px;top:874px" width="20" height="20" viewBox="0 0 20 20"><path d="M5 5 L10 2.500 L15 5 V11 L10 13.500 L5 11 Z M5 5 L10 7.500 L15 5 M10 7.500 V13.500" fill="none" stroke="#d8d8d8" stroke-width="1.300"/><path d="M3 12 C3 17 9 18.500 13 17 M11 15 L13.500 17 L11.500 19" fill="none" stroke="#d8d8d8" stroke-width="1.300"/></svg><div class="t" style="left:634px;top:877px;color:#8e8e8e">左旋</div>
<svg style="left:674px;top:874px" width="20" height="20" viewBox="0 0 20 20"><path d="M5 5 L10 2.500 L15 5 V11 L10 13.500 L5 11 Z M5 5 L10 7.500 L15 5 M10 7.500 V13.500" fill="none" stroke="#d8d8d8" stroke-width="1.300"/><path d="M17 12 C17 17 11 18.500 7 17 M9 15 L6.500 17 L8.500 19" fill="none" stroke="#d8d8d8" stroke-width="1.300"/></svg><div class="t" style="left:700px;top:877px;color:#8e8e8e">右旋</div>
<svg style="left:736px;top:874px" width="20" height="20" viewBox="0 0 20 20"><path d="M3 2.500 H17 L10 9 Z" fill="#e8e8e8"/><path d="M3 17.500 H17 L10 11 Z" fill="#b0b0b0"/><path d="M2 10 H18" stroke="#ddd" stroke-width="1" stroke-dasharray="2 1.500"/></svg><div class="t" style="left:762px;top:877px;color:#8e8e8e">水平镜像</div>
<svg style="left:820px;top:874px" width="20" height="20" viewBox="0 0 20 20"><path d="M2.500 3 V17 L9 10 Z" fill="#e8e8e8"/><path d="M17.500 3 V17 L11 10 Z" fill="#b0b0b0"/><path d="M10 2 V18" stroke="#ddd" stroke-width="1.200"/></svg><div class="t" style="left:846px;top:877px;color:#8e8e8e">垂直镜像</div>
<svg style="left:904px;top:874px" width="20" height="20" viewBox="0 0 20 20"><path d="M2 16 L8 4 V16 Z" fill="#e8e8e8"/><path d="M18 16 L12 4 V16 Z" fill="#b8b8b8"/><path d="M10 2 V18" stroke="#eee" stroke-width="1.200"/><path d="M8 10 H13 M11.500 8 L13.500 10 L11.500 12" stroke="#333" stroke-width="1.200" fill="none"/></svg><div class="t" style="left:930px;top:877px;color:#8e8e8e">对齐旋转</div>
<svg style="left:988px;top:874px" width="20" height="20" viewBox="0 0 20 20"><circle cx="10" cy="10" r="7.500" fill="none" stroke="#c8c8c8" stroke-width="1.300" stroke-dasharray="9 2"/><circle cx="10" cy="10" r="4" fill="#b8b8b8"/></svg><div class="t" style="left:1014px;top:877px;color:#8e8e8e">自动旋转</div>
<div class="t" style="left:1070px;top:877px">零件间距</div><div class="a" style="left:1126px;top:872px;width:98px;height:25px;background:#fff;box-sizing:border-box;border:1px solid #999"></div><div class="t" style="left:1130px;top:877px;color:#111">5</div><div class="t" style="left:1126px;top:877px;width:95px;text-align:right;color:#111"><span class="l">mm</span></div>
<div class="t" style="left:1227px;top:877px">板材边距</div><div class="a" style="left:1283px;top:872px;width:98px;height:25px;background:#fff;box-sizing:border-box;border:1px solid #999"></div><div class="t" style="left:1287px;top:877px;color:#111">5</div><div class="t" style="left:1283px;top:877px;width:95px;text-align:right;color:#111"><span class="l">mm</span></div>
<div class="a" style="left:1384px;top:870px;width:63px;height:28px;background:#1e7be0"></div><svg style="left:1392px;top:877px" width="17" height="17" viewBox="0 0 17 17"><rect x="1.0" y="1.0" width="4" height="4" fill="#fff"/><rect x="6.5" y="1.0" width="4" height="4" fill="#a8d0ff"/><rect x="12.0" y="1.0" width="4" height="4" fill="#fff"/><rect x="1.0" y="6.5" width="4" height="4" fill="#a8d0ff"/><rect x="6.5" y="6.5" width="4" height="4" fill="#fff"/><rect x="12.0" y="6.5" width="4" height="4" fill="#a8d0ff"/><rect x="1.0" y="12.0" width="4" height="4" fill="#fff"/><rect x="6.5" y="12.0" width="4" height="4" fill="#a8d0ff"/><rect x="12.0" y="12.0" width="4" height="4" fill="#fff"/></svg><div class="t" style="left:1416px;top:877px">共边</div>
<svg style="left:1458px;top:877px" width="17" height="17" viewBox="0 0 17 17"><rect x="1" y="2" width="14" height="12" fill="none" stroke="#c8c0b0" stroke-width="1.400"/><path d="M3.500 5 H9 V8.500 H6 V11.500 H3.500 Z" fill="#e8dcc0"/><path d="M12 1 V16" stroke="#eee" stroke-width="1"/></svg><div class="t" style="left:1482px;top:877px">贴边</div>
<div class="t" style="left:334px;top:907px" id="log1"><span style="letter-spacing:0.5px">(2024-06-05 19:18:12:383)</span><span style="color:#28c83c">打开 <span style="letter-spacing:0.5px">D:/V9.0-anzhuangbaozhizuo/FilesToInstall/</span>利用率案例<span style="letter-spacing:0.5px">/</span>利用率测试案例<span style="letter-spacing:0.5px">1.hasp 1804ms</span></span></div>
<div class="t" style="left:334px;top:927px" id="log2"><span style="letter-spacing:0.5px">(2024-06-05 19:18:12:386)</span><span style="color:#28c83c">命令<span style="letter-spacing:0.5px">:</span>历史记录</span></div>
<div id="status" class="a"></div><div class="t" style="left:3px;top:1059px" id="st1"><span style="letter-spacing:0.5px">4941.275,4295.302</span></div><div class="t" style="left:1824px;top:1059px">发送问题报告</div>
<div class="a" id="dlg" style="left:772px;top:257px;width:375px;height:565px;background:#333;box-sizing:border-box;border:1px solid #6a6a6a;color:#111">
<div class="t" style="left:3px;top:8px;color:#f0f0f0">排样</div><svg style="left:349px;top:7px" width="17" height="17" viewBox="0 0 17 17"><path d="M1 1 L16 16 M16 1 L1 16" stroke="#eee" stroke-width="1.400"/></svg>
<div class="a" style="left:0;top:31px;width:373px;height:499px;background:#fff"></div>
<div class="a" style="left:9px;top:51px;width:146px;height:53px;box-sizing:border-box;border:1px solid #dcdcdc"></div><div class="t" style="left:10px;top:43px;background:#fff;padding:0 2px;color:#111">排样引擎</div><div class="a" style="left:19px;top:72px;width:126px;height:23px;box-sizing:border-box;border:1px solid #707070;background:#fff"></div><div class="a" style="left:123px;top:72px;width:1px;height:23px;background:#707070"></div><div class="a" style="left:128.0px;top:80.0px"><svg width="12" height="8" viewBox="0 0 12 8"><path d="M1 1 L6 6.500 L11 1" fill="none" stroke="#888" stroke-width="1.100"/></svg></div><div class="t" style="left:23px;top:75.5px;color:#111">智能排样</div>
<div class="a" style="left:9px;top:122px;width:146px;height:53px;box-sizing:border-box;border:1px solid #dcdcdc"></div><div class="t" style="left:10px;top:114px;background:#fff;padding:0 2px;color:#111">零件</div><div class="a" style="left:19px;top:143px;width:126px;height:23px;box-sizing:border-box;border:1px solid #707070;background:#fff"></div><div class="a" style="left:123px;top:143px;width:1px;height:23px;background:#707070"></div><div class="a" style="left:128.0px;top:151.0px"><svg width="12" height="8" viewBox="0 0 12 8"><path d="M1 1 L6 6.500 L11 1" fill="none" stroke="#888" stroke-width="1.100"/></svg></div><div class="t" style="left:23px;top:146.5px;color:#111">仅勾选</div>
<div class="a" style="left:9px;top:192px;width:146px;height:53px;box-sizing:border-box;border:1px solid #dcdcdc"></div><div class="t" style="left:10px;top:184px;background:#fff;padding:0 2px;color:#111">零件组合</div><div class="a" style="left:19px;top:213px;width:126px;height:23px;box-sizing:border-box;border:1px solid #707070;background:#fff"></div><div class="a" style="left:123px;top:213px;width:1px;height:23px;background:#707070"></div><div class="a" style="left:128.0px;top:221.0px"><svg width="12" height="8" viewBox="0 0 12 8"><path d="M1 1 L6 6.500 L11 1" fill="none" stroke="#888" stroke-width="1.100"/></svg></div><div class="t" style="left:23px;top:216.5px;color:#111">仅勾选</div>
<div class="a" style="left:9px;top:263px;width:146px;height:53px;box-sizing:border-box;border:1px solid #dcdcdc"></div><div class="t" style="left:10px;top:255px;background:#fff;padding:0 2px;color:#111">板材</div><div class="a" style="left:19px;top:284px;width:126px;height:23px;box-sizing:border-box;border:1px solid #707070;background:#fff"></div><div class="a" style="left:123px;top:284px;width:1px;height:23px;background:#707070"></div><div class="a" style="left:128.0px;top:292.0px"><svg width="12" height="8" viewBox="0 0 12 8"><path d="M1 1 L6 6.500 L11 1" fill="none" stroke="#888" stroke-width="1.100"/></svg></div><div class="t" style="left:23px;top:287.5px;color:#111">仅勾选</div>
<div class="a" style="left:108px;top:56px;width:46px;height:46px;border-radius:50%;background:rgba(246,120,112,.5)"></div><div class="a" style="left:124px;top:73px;width:20px;height:21px;background:#fbbcb6"></div><svg style="left:125px;top:73px" width="18" height="18" viewBox="0 0 18 18"><circle cx="7" cy="7.500" r="3.600" fill="none" stroke="#8c241c" stroke-width="2.400" stroke-dasharray="1.700 1.100"/><circle cx="7" cy="7.500" r="2.600" fill="none" stroke="#8c241c" stroke-width="1.600"/><circle cx="7" cy="7.500" r="1.200" fill="#e8a098"/><path d="M10 11 L12 13 L15.500 9" fill="none" stroke="#b05048" stroke-width="1.100"/></svg>
<div class="a" style="left:13px;top:328px;width:16px;height:16px;box-sizing:border-box;border:1px solid #333;background:#fff"><svg width="14" height="14" viewBox="0 0 14 14"><path d="M2.500 7 L6 10.500 L12 3" fill="none" stroke="#111" stroke-width="1.600"/></svg></div><div class="t" style="left:38px;top:328px;color:#111;">清除上一次排样结果</div>
<div class="a" style="left:13px;top:358px;width:16px;height:16px;box-sizing:border-box;border:1px solid #333;background:#fff"></div><div class="t" style="left:38px;top:358px;color:#111;">排样完成自动排序</div>
<div class="a" style="left:161px;top:51px;width:203px;height:302px;box-sizing:border-box;border:1px solid #dcdcdc"></div><div class="t" style="left:162px;top:43px;background:#fff;padding:0 2px;color:#111">参数</div><div class="t" style="left:171px;top:76.5px;color:#111;">零件间距</div><div class="a" style="left:229px;top:72px;width:125px;height:25px;box-sizing:border-box;border:1px solid #707070;background:#fff"></div><div class="t" style="left:233px;top:76.5px;color:#111">5</div><div class="t" style="left:229px;top:76.5px;width:123px;text-align:right;color:#111"><span class="l">mm</span></div>
<div class="t" style="left:171px;top:108.5px;color:#111;">板材边距</div><div class="a" style="left:229px;top:104px;width:125px;height:25px;box-sizing:border-box;border:1px solid #707070;background:#fff"></div><div class="t" style="left:233px;top:108.5px;color:#111">5</div><div class="t" style="left:229px;top:108.5px;width:123px;text-align:right;color:#111"><span class="l">mm</span></div>
<div class="t" style="left:171px;top:139.5px;color:#111;">排样方式</div><div class="a" style="left:229px;top:136px;width:125px;height:23px;box-sizing:border-box;border:1px solid #707070;background:#fff"></div><div class="a" style="left:332px;top:136px;width:1px;height:23px;background:#707070"></div><div class="a" style="left:337.0px;top:144.0px"><svg width="12" height="8" viewBox="0 0 12 8"><path d="M1 1 L6 6.500 L11 1" fill="none" stroke="#888" stroke-width="1.100"/></svg></div><div class="t" style="left:233px;top:139.5px;color:#111">按时间</div>
<div class="t" style="left:171px;top:170.0px;color:#111;">排样方向</div><div class="a" style="left:229px;top:167px;width:125px;height:22px;box-sizing:border-box;border:1px solid #707070;background:#fff"></div><div class="a" style="left:332px;top:167px;width:1px;height:22px;background:#707070"></div><div class="a" style="left:337.0px;top:174.5px"><svg width="12" height="8" viewBox="0 0 12 8"><path d="M1 1 L6 6.500 L11 1" fill="none" stroke="#888" stroke-width="1.100"/></svg></div><div class="t" style="left:233px;top:170.0px;color:#111">横向</div>
<div class="t" style="left:171px;top:201.0px;color:#111;">排样时间</div><div class="a" style="left:229px;top:197px;width:125px;height:24px;box-sizing:border-box;border:1px solid #707070;background:#fff"></div><div class="t" style="left:233px;top:201.0px;color:#111">300</div>
<div class="t" style="left:171px;top:232.0px;color:#111;">旋转方式</div><div class="a" style="left:229px;top:229px;width:125px;height:22px;box-sizing:border-box;border:1px solid #707070;background:#fff"></div><div class="a" style="left:332px;top:229px;width:1px;height:22px;background:#707070"></div><div class="a" style="left:337.0px;top:236.5px"><svg width="12" height="8" viewBox="0 0 12 8"><path d="M1 1 L6 6.500 L11 1" fill="none" stroke="#888" stroke-width="1.100"/></svg></div><div class="t" style="left:233px;top:232.0px;color:#111">自由旋转</div>
<div class="t" style="left:171px;top:262.0px;color:#111;">支持镜像</div><div class="a" style="left:229px;top:259px;width:125px;height:22px;box-sizing:border-box;border:1px solid #707070;background:#fff"></div><div class="a" style="left:332px;top:259px;width:1px;height:22px;background:#707070"></div><div class="a" style="left:337.0px;top:266.5px"><svg width="12" height="8" viewBox="0 0 12 8"><path d="M1 1 L6 6.500 L11 1" fill="none" stroke="#888" stroke-width="1.100"/></svg></div><div class="t" style="left:233px;top:262.0px;color:#111">是</div>
<div class="t" style="left:171px;top:292.0px;color:#111;">内孔排样</div><div class="a" style="left:229px;top:289px;width:125px;height:22px;box-sizing:border-box;border:1px solid #707070;background:#fff"></div><div class="a" style="left:332px;top:289px;width:1px;height:22px;background:#707070"></div><div class="a" style="left:337.0px;top:296.5px"><svg width="12" height="8" viewBox="0 0 12 8"><path d="M1 1 L6 6.500 L11 1" fill="none" stroke="#888" stroke-width="1.100"/></svg></div><div class="t" style="left:233px;top:292.0px;color:#111">是</div>
<div class="t" style="left:171px;top:323.5px;color:#111;">内孔大小</div><div class="a" style="left:229px;top:319px;width:125px;height:25px;box-sizing:border-box;border:1px solid #707070;background:#fff"></div><div class="t" style="left:233px;top:323.5px;color:#111">50</div><div class="t" style="left:229px;top:323.5px;width:123px;text-align:right;color:#111"><span class="l">mm</span></div>
<div class="a" style="left:161px;top:371px;width:203px;height:147px;box-sizing:border-box;border:1px solid #dcdcdc"></div><div class="a" style="left:159px;top:362px;width:64px;height:22px;background:#fff"></div><div class="a" style="left:165px;top:365px;width:16px;height:16px;box-sizing:border-box;border:1px solid #333;background:#fff"></div><div class="t" style="left:192px;top:365px;color:#111;">共边</div>
<div class="t" style="left:171px;top:396px;color:#9a9a9a;">最小共边长度</div><div class="a" style="left:255px;top:392px;width:99px;height:25px;box-sizing:border-box;border:1px solid #8a8a8a;background:#fff"></div><div class="t" style="left:259px;top:396.5px;color:#9a9a9a">10</div><div class="t" style="left:255px;top:396.5px;width:97px;text-align:right;color:#9a9a9a"><span class="l">mm</span></div>
<div class="t" style="left:171px;top:428px;color:#9a9a9a;">最大共边个数</div><div class="a" style="left:255px;top:424px;width:99px;height:25px;box-sizing:border-box;border:1px solid #8a8a8a;background:#fff"></div><div class="t" style="left:259px;top:428.5px;color:#9a9a9a">200</div>
<div class="t" style="left:171px;top:459px;color:#9a9a9a;">零件等长共边</div><div class="a" style="left:255px;top:456px;width:99px;height:23px;box-sizing:border-box;border:1px solid #8a8a8a;background:#fff"></div><div class="a" style="left:332px;top:456px;width:1px;height:23px;background:#8a8a8a"></div><div class="a" style="left:337.0px;top:464.0px"><svg width="12" height="8" viewBox="0 0 12 8"><path d="M1 1 L6 6.500 L11 1" fill="none" stroke="#777" stroke-width="1.100"/></svg></div><div class="t" style="left:259px;top:459.5px;color:#9a9a9a">否</div>
<div class="t" style="left:171px;top:490px;color:#9a9a9a;">内轮廓共边</div><div class="a" style="left:255px;top:487px;width:99px;height:22px;box-sizing:border-box;border:1px solid #8a8a8a;background:#fff"></div><div class="a" style="left:332px;top:487px;width:1px;height:22px;background:#8a8a8a"></div><div class="a" style="left:337.0px;top:494.5px"><svg width="12" height="8" viewBox="0 0 12 8"><path d="M1 1 L6 6.500 L11 1" fill="none" stroke="#777" stroke-width="1.100"/></svg></div><div class="t" style="left:259px;top:490.0px;color:#9a9a9a">否</div>
<div class="a" style="left:234px;top:533px;width:65px;height:27px;box-sizing:border-box;background:#fff;border:1px solid #888"></div><div class="t" style="left:234px;top:538px;width:65px;text-align:center;color:#111">确定</div><div class="a" style="left:305px;top:533px;width:65px;height:27px;box-sizing:border-box;background:#fff;border:1px solid #888"></div><div class="t" style="left:305px;top:538px;width:65px;text-align:center;color:#111">取消</div>
</div>
</body>
</html>
